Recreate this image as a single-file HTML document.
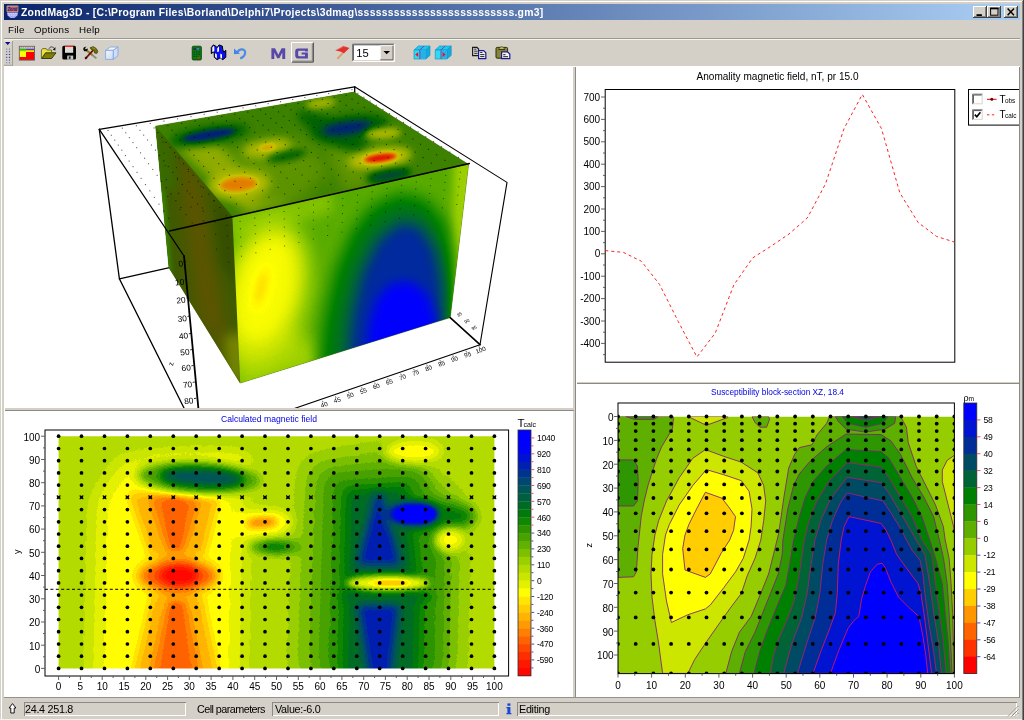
<!DOCTYPE html>
<html>
<head>
<meta charset="utf-8">
<title>ZondMag3D</title>
<style>
html,body{margin:0;padding:0;}
body{width:1024px;height:720px;overflow:hidden;background:#d4d0c8;position:relative;font-family:"Liberation Sans",sans-serif;font-size:10px;color:#000;}
.abs{position:absolute;}
#title-text,.mi,.st{will-change:transform;}
svg{will-change:transform;}
#frame-l1{left:1px;top:1px;width:1px;height:719px;background:#fff;}
#frame-t1{left:1px;top:1px;width:1021px;height:1px;background:#fff;}
#frame-r1{left:1022px;top:1px;width:1px;height:719px;background:#808080;}
#frame-r2{left:1023px;top:0;width:1px;height:720px;background:#404040;}
#frame-b1{left:4px;top:697.4px;width:1015px;height:1px;background:#96928a;}
#frame-b2{left:0;top:719.2px;width:1022px;height:1px;background:#f4f2ee;}
#title{left:4px;top:4px;width:1016px;height:16px;background:linear-gradient(90deg,#0a246a 0%,#a6caf0 97%);}
#title-text{left:21.3px;top:6px;height:14px;line-height:14px;font-weight:bold;font-size:10.4px;color:#fff;white-space:nowrap;letter-spacing:0.255px;}
.tbtn{top:6px;width:14px;height:12px;background:#d4d0c8;box-shadow:inset -1px -1px 0 #404040,inset 1px 1px 0 #fff,inset -2px -2px 0 #808080;}
#menu{left:4px;top:20px;width:1016px;height:18px;}
.mi{top:24.3px;font-size:9.8px;line-height:12px;white-space:nowrap;letter-spacing:0.22px;}
#menu-line1{left:4px;top:38px;width:1016px;height:1px;background:#9c9890;}
#menu-line2{left:4px;top:39px;width:1016px;height:1px;background:#f4f2ee;}
#white{left:4px;top:66px;width:1016px;height:631.6px;background:#fff;}
#frame-b1{z-index:2;}
#vdiv{left:573.4px;top:67px;width:1.6px;height:631px;background:#d4d0c8;}
#vdiv2{left:575px;top:67px;width:1px;height:631px;background:#8c8a84;}
#hdivL{left:5px;top:408px;width:569px;height:2px;background:#d4d0c8;}
#hdivL2{left:5px;top:410px;width:569px;height:1px;background:#8c8a84;}
#hdivR{left:577px;top:382px;width:442px;height:1.4px;background:#d4d0c8;}
#hdivR2{left:577px;top:383.4px;width:442px;height:1px;background:#8c8a84;}
#redge{left:1018.6px;top:67px;width:1.6px;height:631px;background:#8c8a84;}
#status{left:4px;top:698px;width:1016px;height:20px;background:#d4d0c8;}
.sp{top:701.5px;height:14px;box-shadow:inset 1px 1px 0 #8c8a84,inset -1px -1px 0 #fff;}
.st{top:703.2px;font-size:10.8px;line-height:12px;white-space:nowrap;letter-spacing:-0.3px;}
svg{position:absolute;left:0;top:0;}
svg text{font-family:"Liberation Sans",sans-serif;}
</style>
</head>
<body>
<!-- window frame -->
<div class="abs" id="frame-l1"></div><div class="abs" id="frame-t1"></div>
<div class="abs" id="frame-r1"></div><div class="abs" id="frame-r2"></div>
<div class="abs" id="frame-b1"></div><div class="abs" id="frame-b2"></div>
<!-- title bar -->
<div class="abs" id="title"></div>
<div class="abs" id="title-text">ZondMag3D - [C:\Program Files\Borland\Delphi7\Projects\3dmag\ssssssssssssssssssssssssss.gm3]</div>
<div class="abs tbtn" style="left:973px;"></div>
<div class="abs tbtn" style="left:987px;"></div>
<div class="abs tbtn" style="left:1004px;"></div>
<!-- menu -->
<div class="abs mi" style="left:8px;">File</div>
<div class="abs mi" style="left:33.7px;">Options</div>
<div class="abs mi" style="left:78.8px;">Help</div>
<div class="abs" id="menu-line1"></div><div class="abs" id="menu-line2"></div>
<!-- client area -->
<div class="abs" id="white"></div>
<div class="abs" id="vdiv"></div><div class="abs" id="vdiv2"></div>
<div class="abs" id="hdivL"></div><div class="abs" id="hdivL2"></div>
<div class="abs" id="hdivR"></div><div class="abs" id="hdivR2"></div>
<div class="abs" id="redge"></div>
<!-- status bar -->
<div class="abs" id="status"></div>
<div class="abs sp" style="left:24px;width:162px;"></div>
<div class="abs st" style="left:25px;">24.4 251.8</div>
<div class="abs st" style="left:197px;letter-spacing:-0.55px;">Cell parameters</div>
<div class="abs sp" style="left:271.5px;width:227px;"></div>
<div class="abs st" style="left:274.5px;">Value:-6.0</div>
<div class="abs sp" style="left:517px;width:500px;"></div>
<div class="abs st" style="left:518.5px;">Editing</div>
<svg id="chrome" width="1024" height="720" viewBox="0 0 1024 720">
<defs>
<linearGradient id="gCube" x1="0" y1="0" x2="1" y2="1"><stop offset="0" stop-color="#f4f8ff"/><stop offset="1" stop-color="#c8d8f4"/></linearGradient>
</defs>
<!-- title icon -->
<g>
<rect x="6.6" y="5.6" width="11.8" height="6.6" rx="1" fill="#c89870"/>
<rect x="7.4" y="6.8" width="10.2" height="4.4" fill="#7a3a80" opacity="0.55"/><text x="12.5" y="11" font-size="5.4" font-weight="bold" font-style="italic" text-anchor="middle" fill="#4a0a78" textLength="9.6" lengthAdjust="spacingAndGlyphs">Zond</text>
<path d="M6.8 12.4 H18.2 L17.4 15.4 L14.5 18 H10.5 L7.6 15.4 Z" fill="#a8a8f0"/>
<path d="M8 13.6 H17 M8.6 15.2 H16.4" stroke="#e8e8ff" stroke-width="0.9" stroke-dasharray="1.4 1"/>
</g>
<!-- title buttons glyphs -->
<rect x="976.5" y="14.2" width="5.4" height="1.8" fill="#000"/>
<rect x="990.6" y="8.2" width="7.4" height="7" fill="none" stroke="#000" stroke-width="1"/>
<rect x="990.1" y="7.7" width="8.4" height="1.6" fill="#000"/>
<path d="M1007.6 8.6 L1014 15.2 M1014 8.6 L1007.6 15.2" stroke="#000" stroke-width="1.5"/>
<!-- toolbar grip -->
<rect x="4" y="40.5" width="8.5" height="0.9" fill="#fff" opacity="0.8"/>
<rect x="12" y="41" width="0.9" height="24.5" fill="#9c9890"/>
<rect x="4" y="64.8" width="8.8" height="0.9" fill="#9c9890"/>
<path d="M5 42.1 H10.4 L7.7 45 Z" fill="#0a0a84"/>
<g fill="#2a2aa0">
<rect x="6.1" y="48.6" width="1.2" height="1.1" opacity="0.45"/><rect x="8.9" y="48.6" width="1.2" height="1.1" opacity="0.6"/>
<rect x="6.1" y="51.1" width="1.2" height="1.1" opacity="0.55"/><rect x="8.9" y="51.1" width="1.2" height="1.1" opacity="0.8"/>
<rect x="6.1" y="53.9" width="1.2" height="1.1" opacity="0.85"/><rect x="8.9" y="53.9" width="1.2" height="1.1"/>
<rect x="6.1" y="56.8" width="1.2" height="1.1" opacity="0.85"/><rect x="8.9" y="56.8" width="1.2" height="1.1"/>
<rect x="6.1" y="59.5" width="1.2" height="1.1" opacity="0.55"/><rect x="8.9" y="59.5" width="1.2" height="1.1" opacity="0.8"/>
<rect x="6.1" y="62.2" width="1.2" height="1.1" opacity="0.45"/><rect x="8.9" y="62.2" width="1.2" height="1.1" opacity="0.6"/>
</g>
<!-- icon1: model window -->
<g>
<rect x="19.3" y="46.3" width="15.2" height="13.8" fill="#ff0000" stroke="#606060" stroke-width="0.9"/>
<rect x="19.8" y="46.8" width="14.2" height="2" fill="#e8e8e8"/>
<path d="M20.4 47.8 H33.6" stroke="#707070" stroke-width="0.8" stroke-dasharray="1.6 0.7"/>
<rect x="19.8" y="48.8" width="6.8" height="2" fill="#10c020"/>
<rect x="26.4" y="48.8" width="7.6" height="1.4" fill="#3848c8"/>
<rect x="26" y="50.2" width="8" height="1.8" fill="#ffe800"/>
<rect x="19.8" y="50.8" width="6.2" height="6.2" fill="#ffff00"/>
<rect x="19.8" y="50.2" width="6.2" height="1.1" fill="#80e010"/>
</g>
<!-- icon2: open folder -->
<g>
<path d="M41.4 58.4 V50 L42.6 48.6 H46.2 L47.2 50 H51.6 V52.4" fill="#e8e040" stroke="#404020" stroke-width="0.7"/>
<path d="M41.6 58.5 L45.6 52.8 H56 L51.6 58.5 Z" fill="#808000" stroke="#202010" stroke-width="0.8"/>
<path d="M49 48.6 C50 46.4 53 46.4 54.2 48.4" fill="none" stroke="#303030" stroke-width="0.9"/>
<path d="M52.8 49.8 L55.4 47 L55.4 50.4 Z" fill="#101010"/>
</g>
<!-- icon3: floppy -->
<g>
<rect x="62.3" y="45.8" width="13.7" height="13.8" rx="1.6" fill="#000"/>
<rect x="65" y="45.8" width="8.2" height="1.2" fill="#ff2020"/>
<rect x="65" y="47" width="8.2" height="5.8" fill="#dcdad4"/>
<rect x="67.2" y="55.6" width="6" height="4" fill="#c8c8c8"/>
<rect x="68.8" y="56.4" width="1.8" height="2.4" fill="#202020"/>
</g>
<!-- icon4: tools -->
<g>
<path d="M86.4 50.2 L96.4 58.4" stroke="#8a8a80" stroke-width="1.8"/>
<path d="M86.4 50.2 L92.4 55" stroke="#8a8a00" stroke-width="1.8"/>
<path d="M83.3 49.2 C83 47.4 84.6 46.4 86.6 46.8 L85 48.1 L85.6 49.3 L87.8 48.4 C88 50.2 86.8 51.4 85 51.3 C84.1 51.2 83.5 50.4 83.3 49.2 Z" fill="#0c0c0c"/>
<path d="M85.4 58.6 L93 50.4" stroke="#780a14" stroke-width="1.7"/>
<path d="M85.2 58.8 L86.8 57.1" stroke="#181818" stroke-width="2"/>
<path d="M90 47.8 L93.2 46.6 L96.2 48.4 L97.9 51.2 L96.8 53.5 L94.5 53.1 L94.2 50.9 L91.4 49.6 Z" fill="#6e6e00" stroke="#2c2c00" stroke-width="0.6" stroke-linejoin="round"/>
<path d="M92.2 47.6 L95.4 49" stroke="#a8a820" stroke-width="0.7"/>
</g>
<!-- icon5: cube -->
<g stroke="#86a8e0" stroke-width="0.9" stroke-linejoin="round">
<path d="M105.6 50.4 L110.4 47 H118 L113.2 50.4 Z" fill="#f0f4ff"/>
<path d="M113.2 50.4 L118 47 V55.6 L113.2 59.4 Z" fill="#d0dcf4"/>
<rect x="105.6" y="50.4" width="7.6" height="9" fill="url(#gCube)"/>
</g>
<!-- calc -->
<g>
<rect x="192.2" y="46.2" width="9.2" height="13.8" rx="1.2" fill="#0a7a14" stroke="#0a3a0a" stroke-width="0.8"/>
<rect x="193.6" y="47.8" width="6.4" height="2.2" fill="#203838"/>
<rect x="196.4" y="48.2" width="3" height="1.4" fill="#40a0c0"/>
<g fill="#064a0a"><rect x="193.6" y="51.4" width="1.4" height="1.1"/><rect x="196.1" y="51.4" width="1.4" height="1.1"/><rect x="198.6" y="51.4" width="1.4" height="1.1"/>
<rect x="193.6" y="53.6" width="1.4" height="1.1"/><rect x="196.1" y="53.6" width="1.4" height="1.1"/><rect x="198.6" y="53.6" width="1.4" height="1.1"/>
<rect x="193.6" y="55.8" width="1.4" height="1.1"/><rect x="196.1" y="55.8" width="1.4" height="1.1"/></g>
<rect x="197.4" y="57.4" width="2.8" height="1.2" fill="#e03010"/>
</g>
<!-- wave -->
<path d="M211.3 53.6 V47.5 L213.4 44.9 L215.7 46.1 L217.1 47.5 L219 44.9 L222.3 46.1 L222.8 49.4 L223.7 52.2 L225.8 50.3 V57.3 L222.8 59.7 L220.2 57.8 L217.1 59.7 L214.3 57.3 L214.1 51.7 Z" fill="#0a10f0" stroke="#000" stroke-width="1" stroke-linejoin="round"/>
<path d="M212.3 52 V47.4 L213.6 46 L214.3 46.6 V51.2 Z M217.2 52 V48.4 L219 46.2 V51.6 Z M215.1 53.2 L216.8 54.2 V58.4 L215.1 57 Z M220.3 53.6 L222 54.6 V58.8 L220.3 57.4 Z" fill="#fff"/>
<!-- undo -->
<g>
<path d="M237.6 52 C239.6 48.4 245.6 48.2 245.1 53.2 C244.8 55.8 242.8 57.6 240.2 58.4" fill="none" stroke="#4a8ae8" stroke-width="2.2"/>
<path d="M234 48.6 V54.2 L240 53.7 Z" fill="#3f86ea"/>
</g>
<!-- M -->
<path d="M271.4 59 V48.2 H275 L278.3 54.8 L281.6 48.2 H285.2 V59 H282.3 V52.4 L279.4 58.2 H277.2 L274.3 52.4 V59 Z" fill="#5848a8"/>
<!-- G button -->
<rect x="291" y="42" width="22.8" height="20.6" fill="#d4d0c8"/>
<path d="M291.5 62 V42.5 H313" fill="none" stroke="#fff" stroke-width="1"/>
<path d="M292 62.1 H313.3 V42.6" fill="none" stroke="#404040" stroke-width="1"/>
<path d="M293 61.1 H312.3 V43.6" fill="none" stroke="#808080" stroke-width="1"/>
<path d="M307.9 51.6 V48.4 H298 C296.2 48.4 295.2 49.6 295.2 51.4 V55.4 C295.2 57.4 296.4 58.6 298.2 58.6 H307.9 V52.6 H301.6 V54.4 H305 V56.2 H299.4 C298.6 56.2 298.2 55.8 298.2 55 V52 C298.2 51.2 298.6 50.8 299.4 50.8 H305 V51.6 Z" fill="#5848a8"/>
<!-- flag -->
<g>
<path d="M337.4 58.8 L344 51.6" stroke="#d8a060" stroke-width="1.8"/>
<path d="M335.4 50.6 L343.6 46 L349.4 48 L344 53.2 L340.2 51.4 Z" fill="#e03030"/>
<path d="M335.6 50.4 L343.6 46.2 L346 47" stroke="#f08080" stroke-width="0.8" fill="none"/>
</g>
<!-- combo -->
<g>
<rect x="352" y="43.4" width="43" height="18.4" fill="#fff"/>
<path d="M352.5 61.4 V43.9 H394.6" fill="none" stroke="#808080" stroke-width="1"/>
<path d="M353.4 60.5 V44.8 H393.8" fill="none" stroke="#404040" stroke-width="0.9"/>
<path d="M352.5 61.4 H394.6 V43.9" fill="none" stroke="#fff" stroke-width="1"/>
<path d="M353.4 60.5 H393.7 V44.8" fill="none" stroke="#d4d0c8" stroke-width="0.9"/>
<rect x="380" y="45.3" width="13.3" height="14.8" fill="#d4d0c8"/>
<path d="M380.4 59.8 V45.7 H393" fill="none" stroke="#fff" stroke-width="0.8"/>
<path d="M380.4 59.8 H393 V45.7" fill="none" stroke="#606060" stroke-width="0.9"/>
<path d="M383.4 51 H390 L386.7 54.2 Z" fill="#000"/>
<text x="356.2" y="56.7" font-size="11.2" fill="#000">15</text>
</g>
<!-- cube-left -->
<g stroke-linejoin="round">
<path d="M414 50 L418.4 46 H430 L425.8 50 Z" fill="#20c8f0" stroke="#1098d0" stroke-width="0.7"/>
<path d="M425.8 50 L430 46 V55.4 L425.8 59 Z" fill="#18a8d8" stroke="#1098d0" stroke-width="0.7"/>
<rect x="414" y="50" width="11.8" height="9" fill="#30d8f0" stroke="#1098d0" stroke-width="0.7"/>
<rect x="420" y="50.4" width="5.4" height="8.2" fill="#28b0e8"/>
<path d="M419.8 59 V50 L424 46" fill="none" stroke="#7048b0" stroke-width="1"/>
<path d="M415.2 54.6 L418.2 52.2 V57 Z" fill="#f01020"/>
</g>
<!-- cube-right -->
<g stroke-linejoin="round">
<path d="M435.2 50 L439.6 46 H451.2 L447 50 Z" fill="#20c8f0" stroke="#1098d0" stroke-width="0.7"/>
<path d="M447 50 L451.2 46 V55.4 L447 59 Z" fill="#18a8d8" stroke="#1098d0" stroke-width="0.7"/>
<rect x="435.2" y="50" width="11.8" height="9" fill="#30d8f0" stroke="#1098d0" stroke-width="0.7"/>
<rect x="441.4" y="50.4" width="5.2" height="8.2" fill="#28b0e8"/>
<path d="M441 59 V50 L445.2 46" fill="none" stroke="#7048b0" stroke-width="1"/>
<path d="M445.6 54.6 L442.6 52.2 V57 Z" fill="#f01020"/>
</g>
<!-- copy -->
<g>
<path d="M472.6 47.4 H477 L478.6 49 V55.6 H472.6 Z" fill="#d0d0d0" stroke="#181818" stroke-width="1.1"/>
<path d="M474.2 49.2 H476.4 M474.2 51.2 H477.6 M474.2 53.4 H477.6" stroke="#101010" stroke-width="0.8"/>
<path d="M478.6 50.6 H483.6 L485.8 52.8 V58.6 H478.6 Z" fill="#f4f4f4" stroke="#181890" stroke-width="1.2"/>
<path d="M480.2 52.5 H482.4 M480.2 54.6 H484.4 M480.2 56.6 H484.4" stroke="#080808" stroke-width="0.9"/>
</g>
<!-- paste -->
<g>
<rect x="496" y="47.4" width="11.6" height="10.8" rx="1.2" fill="#86863a" stroke="#2a2a10" stroke-width="1"/>
<path d="M499 49.4 C499.4 46 504 46 504.4 49.4 Z" fill="#d8d020" stroke="#38381a" stroke-width="0.7"/>
<path d="M498.4 49.6 H505.2" stroke="#303030" stroke-width="0.9"/>
<path d="M501.6 51.8 H507.4 L509.8 54 V58.6 H501.6 Z" fill="#f4f4f4" stroke="#181890" stroke-width="1.2"/>
<path d="M503.2 54.7 H505.6 M503.2 56.7 H508" stroke="#080808" stroke-width="0.9"/>
</g>
<!-- status icons -->
<path d="M12.5 703.6 L15.9 708 H14.2 V713 H10.8 V708 H9.1 Z" fill="#fff" stroke="#000" stroke-width="0.9"/>
<g fill="#1848d8"><rect x="507.4" y="703.4" width="3" height="2.4"/><path d="M506.4 707 H510.4 V713 H511.4 V714.2 H506.4 V713 H507.4 V708.2 H506.4 Z"/></g>
<!-- size grip -->
<path d="M1008 716.5 L1018.5 706 M1011.5 716.5 L1018.5 709.5 M1015 716.5 L1018.5 713" stroke="#8c8a84" stroke-width="1"/>
<path d="M1009 716.5 L1018.5 707 M1012.5 716.5 L1018.5 710.5 M1016 716.5 L1018.5 714" stroke="#fff" stroke-width="0.8"/>

</svg>

<svg id="ctr" width="1024" height="720" viewBox="0 0 1024 720">
<defs><clipPath id="clipTR"><rect x="577" y="67" width="442" height="315"/></clipPath></defs>
<g clip-path="url(#clipTR)">
<text x="777.5" y="80" font-size="10" text-anchor="middle" fill="#000" textLength="162" lengthAdjust="spacingAndGlyphs">Anomality magnetic field, nT,  pr 15.0</text>
<rect x="605.2" y="89.5" width="349.6" height="272.7" fill="none" stroke="#000" stroke-width="1"/>
<path d="M601 97.0 H605" stroke="#505050" stroke-width="0.9"/>
<text x="600.2" y="100.6" font-size="10" text-anchor="end">700</text>
<path d="M601 119.4 H605" stroke="#505050" stroke-width="0.9"/>
<text x="600.2" y="123.0" font-size="10" text-anchor="end">600</text>
<path d="M601 141.8 H605" stroke="#505050" stroke-width="0.9"/>
<text x="600.2" y="145.4" font-size="10" text-anchor="end">500</text>
<path d="M601 164.2 H605" stroke="#505050" stroke-width="0.9"/>
<text x="600.2" y="167.8" font-size="10" text-anchor="end">400</text>
<path d="M601 186.6 H605" stroke="#505050" stroke-width="0.9"/>
<text x="600.2" y="190.2" font-size="10" text-anchor="end">300</text>
<path d="M601 209.0 H605" stroke="#505050" stroke-width="0.9"/>
<text x="600.2" y="212.6" font-size="10" text-anchor="end">200</text>
<path d="M601 231.4 H605" stroke="#505050" stroke-width="0.9"/>
<text x="600.2" y="235.0" font-size="10" text-anchor="end">100</text>
<path d="M601 253.8 H605" stroke="#505050" stroke-width="0.9"/>
<text x="600.2" y="257.4" font-size="10" text-anchor="end">0</text>
<path d="M601 276.2 H605" stroke="#505050" stroke-width="0.9"/>
<text x="600.2" y="279.8" font-size="10" text-anchor="end">-100</text>
<path d="M601 298.6 H605" stroke="#505050" stroke-width="0.9"/>
<text x="600.2" y="302.2" font-size="10" text-anchor="end">-200</text>
<path d="M601 321.0 H605" stroke="#505050" stroke-width="0.9"/>
<text x="600.2" y="324.6" font-size="10" text-anchor="end">-300</text>
<path d="M601 343.4 H605" stroke="#505050" stroke-width="0.9"/>
<text x="600.2" y="347.0" font-size="10" text-anchor="end">-400</text>
<path d="M603 108.2 H605" stroke="#505050" stroke-width="0.9"/>
<path d="M603 130.6 H605" stroke="#505050" stroke-width="0.9"/>
<path d="M603 153.0 H605" stroke="#505050" stroke-width="0.9"/>
<path d="M603 175.4 H605" stroke="#505050" stroke-width="0.9"/>
<path d="M603 197.8 H605" stroke="#505050" stroke-width="0.9"/>
<path d="M603 220.2 H605" stroke="#505050" stroke-width="0.9"/>
<path d="M603 242.6 H605" stroke="#505050" stroke-width="0.9"/>
<path d="M603 265.0 H605" stroke="#505050" stroke-width="0.9"/>
<path d="M603 287.4 H605" stroke="#505050" stroke-width="0.9"/>
<path d="M603 309.8 H605" stroke="#505050" stroke-width="0.9"/>
<path d="M603 332.2 H605" stroke="#505050" stroke-width="0.9"/>
<path d="M603 354.6 H605" stroke="#505050" stroke-width="0.9"/>
<path d="M605.3 250.6 L623.4 252.4 L641.5 261.3 L659.6 284.5 L678.2 321.4 L696.9 357.0 L715.2 333.2 L733.8 285.0 L752.6 258.0 L771.0 246.2 L789.0 234.0 L807.3 218.0 L825.6 183.7 L844.0 128.7 L862.3 94.4 L881.5 128.7 L899.8 192.8 L918.2 222.6 L936.5 236.4 L954.0 241.9" fill="none" stroke="#ff2020" stroke-width="1" stroke-dasharray="3 3"/>
<rect x="968.5" y="89.5" width="60" height="35.6" fill="#fff" stroke="#000" stroke-width="1"/>
<rect x="972" y="93.6" width="10.6" height="10.6" fill="#fff"/>
<path d="M972.5 104.19999999999999 V94.1 H982.6" fill="none" stroke="#808080" stroke-width="1"/>
<path d="M973.4 103.39999999999999 V95.0 H981.8" fill="none" stroke="#404040" stroke-width="0.9"/>
<path d="M973 103.8 H982.2 V94.6" fill="none" stroke="#d4d0c8" stroke-width="0.9"/>
<rect x="972" y="109.2" width="10.6" height="10.6" fill="#fff"/>
<path d="M972.5 119.8 V109.7 H982.6" fill="none" stroke="#808080" stroke-width="1"/>
<path d="M973.4 119.0 V110.60000000000001 H981.8" fill="none" stroke="#404040" stroke-width="0.9"/>
<path d="M973 119.4 H982.2 V110.2" fill="none" stroke="#d4d0c8" stroke-width="0.9"/>
<path d="M974.8 114.6 L976.8 116.8 L980.4 112.2" fill="none" stroke="#000" stroke-width="1.6"/>
<path d="M987 99.3 H996.6" stroke="#e00000" stroke-width="1"/><circle cx="991.8" cy="99.3" r="1.5" fill="#700000"/>
<path d="M987 114.8 H996.6" stroke="#ff2020" stroke-width="1" stroke-dasharray="2.4 2.4"/>
<text x="999.6" y="102.8" font-size="10">T</text><text x="1005" y="102.8" font-size="6.4">obs</text>
<text x="999.6" y="118.4" font-size="10">T</text><text x="1005" y="118.4" font-size="6.4">calc</text>
</g></svg>
<svg id="cbl" width="1024" height="720" viewBox="0 0 1024 720">
<defs>
<clipPath id="clipBL"><rect x="58.6" y="436.25" width="435.79999999999995" height="232.14999999999998"/></clipPath>
<filter id="cmBL" x="0" y="0" width="1" height="1" color-interpolation-filters="sRGB"><feComponentTransfer><feFuncR type="discrete" tableValues="1.000 1.000 1.000 1.000 1.000 1.000 1.000 1.000 1.000 1.000 1.000 0.892 0.794 0.706 0.602 0.486 0.379 0.282 0.175 0.058 0.000 0.000 0.000 0.000 0.000 0.000 0.000 0.000 0.000 0.000 0.000"/><feFuncG type="discrete" tableValues="0.032 0.095 0.180 0.277 0.387 0.503 0.608 0.706 0.803 0.900 0.996 0.946 0.900 0.861 0.811 0.753 0.694 0.636 0.581 0.528 0.474 0.420 0.373 0.334 0.277 0.199 0.124 0.061 0.015 0.000 0.000"/><feFuncB type="discrete" tableValues="0.000 0.000 0.000 0.000 0.000 0.000 0.000 0.000 0.000 0.000 0.000 0.000 0.000 0.000 0.000 0.000 0.000 0.000 0.000 0.000 0.049 0.146 0.244 0.341 0.448 0.564 0.694 0.832 0.958 1.000 1.000"/></feComponentTransfer></filter>
<filter id="b2" x="-1" y="-1" width="3" height="3" color-interpolation-filters="sRGB"><feGaussianBlur stdDeviation="2"/></filter>
<filter id="b3" x="-1" y="-1" width="3" height="3" color-interpolation-filters="sRGB"><feGaussianBlur stdDeviation="3"/></filter>
<filter id="b4" x="-1" y="-1" width="3" height="3" color-interpolation-filters="sRGB"><feGaussianBlur stdDeviation="4"/></filter>
<filter id="b5" x="-1" y="-1" width="3" height="3" color-interpolation-filters="sRGB"><feGaussianBlur stdDeviation="5"/></filter>
<filter id="b6" x="-1" y="-1" width="3" height="3" color-interpolation-filters="sRGB"><feGaussianBlur stdDeviation="6"/></filter>
<filter id="b7" x="-1" y="-1" width="3" height="3" color-interpolation-filters="sRGB"><feGaussianBlur stdDeviation="7"/></filter>
<filter id="b8" x="-1" y="-1" width="3" height="3" color-interpolation-filters="sRGB"><feGaussianBlur stdDeviation="8"/></filter>
<filter id="b10" x="-1" y="-1" width="3" height="3" color-interpolation-filters="sRGB"><feGaussianBlur stdDeviation="10"/></filter>
<filter id="b12" x="-1" y="-1" width="3" height="3" color-interpolation-filters="sRGB"><feGaussianBlur stdDeviation="12"/></filter>
<filter id="b14" x="-1" y="-1" width="3" height="3" color-interpolation-filters="sRGB"><feGaussianBlur stdDeviation="14"/></filter>
</defs>
<g clip-path="url(#clipBL)"><g filter="url(#cmBL)">
<rect x="40" y="420" width="480" height="270" fill="#6f6f6f"/>
<polygon points="96,500 122,460 244,456 240,690 92,690" fill="#585858" filter="url(#b10)"/>
<polygon points="128,493 220,493 204,556 150,556" fill="#3e3e3e" filter="url(#b5)"/>
<polygon points="152,596 202,596 220,680 132,680" fill="#3e3e3e" filter="url(#b5)"/>
<polygon points="160,540 194,540 194,610 160,610" fill="#424242" filter="url(#b5)"/>
<polygon points="150,496 200,496 184,552 168,552" fill="#2a2a2a" filter="url(#b4)"/>
<polygon points="168,600 186,600 202,680 150,680" fill="#2a2a2a" filter="url(#b4)"/>
<polygon points="166,498 184,498 178,548 172,548" fill="#222222" filter="url(#b3)"/>
<polygon points="172,604 180,604 186,682 164,682" fill="#222222" filter="url(#b3)"/>
<ellipse cx="178" cy="576" rx="40" ry="16" fill="#212121" filter="url(#b6)"/>
<ellipse cx="179" cy="575.5" rx="19" ry="9" fill="#000000" filter="url(#b4)"/>
<ellipse cx="196" cy="460" rx="52" ry="7" fill="#5c5c5c" filter="url(#b5)"/>
<ellipse cx="199" cy="478" rx="62" ry="16" fill="#919191" filter="url(#b5)" transform="rotate(3 199 478)"/>
<ellipse cx="202" cy="477.5" rx="42" ry="9.5" fill="#c2c2c2" filter="url(#b4)" transform="rotate(3 202 477.5)"/>
<ellipse cx="258" cy="524" rx="37" ry="14" fill="#555555" filter="url(#b5)" transform="rotate(-4 258 524)"/>
<ellipse cx="262" cy="522.5" rx="15" ry="4.5" fill="#2b2b2b" filter="url(#b3)" transform="rotate(-4 262 522.5)"/>
<ellipse cx="277" cy="547" rx="27" ry="7" fill="#999999" filter="url(#b4)"/>
<ellipse cx="277" cy="547" rx="14" ry="3.5" fill="#a8a8a8" filter="url(#b3)"/>
<polygon points="306,462 395,448 462,500 458,680 296,680 300,560" fill="#878787" filter="url(#b12)"/>
<polygon points="328,476 420,470 442,520 440,680 322,680" fill="#999999" filter="url(#b8)"/>
<polygon points="346,490 408,486 420,600 418,680 342,680" fill="#b0b0b0" filter="url(#b6)"/>
<polygon points="375,494 383,494 402,566 356,566" fill="#d9d9d9" filter="url(#b5)"/>
<polygon points="357,603 400,603 390,690 370,690" fill="#d9d9d9" filter="url(#b5)"/>
<ellipse cx="432" cy="516" rx="44" ry="14" fill="#a8a8a8" filter="url(#b6)"/>
<ellipse cx="412" cy="514" rx="26" ry="11.5" fill="#e6e6e6" filter="url(#b4)"/>
<ellipse cx="416" cy="514" rx="20" ry="8" fill="#ffffff" filter="url(#b3)"/>
<ellipse cx="413" cy="451.5" rx="28" ry="11" fill="#575757" filter="url(#b4)"/>
<ellipse cx="450" cy="540" rx="15" ry="12" fill="#585858" filter="url(#b4)"/>
<ellipse cx="386" cy="597" rx="48" ry="5" fill="#b0b0b0" filter="url(#b4)"/>
<ellipse cx="388" cy="583" rx="42" ry="7.5" fill="#585858" filter="url(#b3)"/>
<ellipse cx="391" cy="583" rx="18" ry="2.6" fill="#3b3b3b" filter="url(#b2)"/>
</g></g>
<g fill="#000"><circle cx="58.6" cy="436.2" r="1.85"/><circle cx="81.5" cy="436.2" r="1.85"/><circle cx="104.5" cy="436.2" r="1.85"/><circle cx="127.4" cy="436.2" r="1.85"/><circle cx="150.3" cy="436.2" r="1.85"/><circle cx="173.3" cy="436.2" r="1.85"/><circle cx="196.2" cy="436.2" r="1.85"/><circle cx="219.2" cy="436.2" r="1.85"/><circle cx="242.1" cy="436.2" r="1.85"/><circle cx="265.0" cy="436.2" r="1.85"/><circle cx="288.0" cy="436.2" r="1.85"/><circle cx="310.9" cy="436.2" r="1.85"/><circle cx="333.8" cy="436.2" r="1.85"/><circle cx="356.8" cy="436.2" r="1.85"/><circle cx="379.7" cy="436.2" r="1.85"/><circle cx="402.7" cy="436.2" r="1.85"/><circle cx="425.6" cy="436.2" r="1.85"/><circle cx="448.5" cy="436.2" r="1.85"/><circle cx="471.5" cy="436.2" r="1.85"/><circle cx="494.4" cy="436.2" r="1.85"/><circle cx="58.6" cy="448.5" r="1.85"/><circle cx="81.5" cy="448.5" r="1.85"/><circle cx="104.5" cy="448.5" r="1.85"/><circle cx="127.4" cy="448.5" r="1.85"/><circle cx="150.3" cy="448.5" r="1.85"/><circle cx="173.3" cy="448.5" r="1.85"/><circle cx="196.2" cy="448.5" r="1.85"/><circle cx="219.2" cy="448.5" r="1.85"/><circle cx="242.1" cy="448.5" r="1.85"/><circle cx="265.0" cy="448.5" r="1.85"/><circle cx="288.0" cy="448.5" r="1.85"/><circle cx="310.9" cy="448.5" r="1.85"/><circle cx="333.8" cy="448.5" r="1.85"/><circle cx="356.8" cy="448.5" r="1.85"/><circle cx="379.7" cy="448.5" r="1.85"/><circle cx="402.7" cy="448.5" r="1.85"/><circle cx="425.6" cy="448.5" r="1.85"/><circle cx="448.5" cy="448.5" r="1.85"/><circle cx="471.5" cy="448.5" r="1.85"/><circle cx="494.4" cy="448.5" r="1.85"/><circle cx="58.6" cy="460.7" r="1.85"/><circle cx="81.5" cy="460.7" r="1.85"/><circle cx="104.5" cy="460.7" r="1.85"/><circle cx="127.4" cy="460.7" r="1.85"/><circle cx="150.3" cy="460.7" r="1.85"/><circle cx="173.3" cy="460.7" r="1.85"/><circle cx="196.2" cy="460.7" r="1.85"/><circle cx="219.2" cy="460.7" r="1.85"/><circle cx="242.1" cy="460.7" r="1.85"/><circle cx="265.0" cy="460.7" r="1.85"/><circle cx="288.0" cy="460.7" r="1.85"/><circle cx="310.9" cy="460.7" r="1.85"/><circle cx="333.8" cy="460.7" r="1.85"/><circle cx="356.8" cy="460.7" r="1.85"/><circle cx="379.7" cy="460.7" r="1.85"/><circle cx="402.7" cy="460.7" r="1.85"/><circle cx="425.6" cy="460.7" r="1.85"/><circle cx="448.5" cy="460.7" r="1.85"/><circle cx="471.5" cy="460.7" r="1.85"/><circle cx="494.4" cy="460.7" r="1.85"/><circle cx="58.6" cy="472.9" r="1.85"/><circle cx="81.5" cy="472.9" r="1.85"/><circle cx="104.5" cy="472.9" r="1.85"/><circle cx="127.4" cy="472.9" r="1.85"/><circle cx="150.3" cy="472.9" r="1.85"/><circle cx="173.3" cy="472.9" r="1.85"/><circle cx="196.2" cy="472.9" r="1.85"/><circle cx="219.2" cy="472.9" r="1.85"/><circle cx="242.1" cy="472.9" r="1.85"/><circle cx="265.0" cy="472.9" r="1.85"/><circle cx="288.0" cy="472.9" r="1.85"/><circle cx="310.9" cy="472.9" r="1.85"/><circle cx="333.8" cy="472.9" r="1.85"/><circle cx="356.8" cy="472.9" r="1.85"/><circle cx="379.7" cy="472.9" r="1.85"/><circle cx="402.7" cy="472.9" r="1.85"/><circle cx="425.6" cy="472.9" r="1.85"/><circle cx="448.5" cy="472.9" r="1.85"/><circle cx="471.5" cy="472.9" r="1.85"/><circle cx="494.4" cy="472.9" r="1.85"/><circle cx="58.6" cy="485.1" r="1.85"/><circle cx="81.5" cy="485.1" r="1.85"/><circle cx="104.5" cy="485.1" r="1.85"/><circle cx="127.4" cy="485.1" r="1.85"/><circle cx="150.3" cy="485.1" r="1.85"/><circle cx="173.3" cy="485.1" r="1.85"/><circle cx="196.2" cy="485.1" r="1.85"/><circle cx="219.2" cy="485.1" r="1.85"/><circle cx="242.1" cy="485.1" r="1.85"/><circle cx="265.0" cy="485.1" r="1.85"/><circle cx="288.0" cy="485.1" r="1.85"/><circle cx="310.9" cy="485.1" r="1.85"/><circle cx="333.8" cy="485.1" r="1.85"/><circle cx="356.8" cy="485.1" r="1.85"/><circle cx="379.7" cy="485.1" r="1.85"/><circle cx="402.7" cy="485.1" r="1.85"/><circle cx="425.6" cy="485.1" r="1.85"/><circle cx="448.5" cy="485.1" r="1.85"/><circle cx="471.5" cy="485.1" r="1.85"/><circle cx="494.4" cy="485.1" r="1.85"/><circle cx="58.6" cy="509.6" r="1.85"/><circle cx="81.5" cy="509.6" r="1.85"/><circle cx="104.5" cy="509.6" r="1.85"/><circle cx="127.4" cy="509.6" r="1.85"/><circle cx="150.3" cy="509.6" r="1.85"/><circle cx="173.3" cy="509.6" r="1.85"/><circle cx="196.2" cy="509.6" r="1.85"/><circle cx="219.2" cy="509.6" r="1.85"/><circle cx="242.1" cy="509.6" r="1.85"/><circle cx="265.0" cy="509.6" r="1.85"/><circle cx="288.0" cy="509.6" r="1.85"/><circle cx="310.9" cy="509.6" r="1.85"/><circle cx="333.8" cy="509.6" r="1.85"/><circle cx="356.8" cy="509.6" r="1.85"/><circle cx="379.7" cy="509.6" r="1.85"/><circle cx="402.7" cy="509.6" r="1.85"/><circle cx="425.6" cy="509.6" r="1.85"/><circle cx="448.5" cy="509.6" r="1.85"/><circle cx="471.5" cy="509.6" r="1.85"/><circle cx="494.4" cy="509.6" r="1.85"/><circle cx="58.6" cy="521.8" r="1.85"/><circle cx="81.5" cy="521.8" r="1.85"/><circle cx="104.5" cy="521.8" r="1.85"/><circle cx="127.4" cy="521.8" r="1.85"/><circle cx="150.3" cy="521.8" r="1.85"/><circle cx="173.3" cy="521.8" r="1.85"/><circle cx="196.2" cy="521.8" r="1.85"/><circle cx="219.2" cy="521.8" r="1.85"/><circle cx="242.1" cy="521.8" r="1.85"/><circle cx="265.0" cy="521.8" r="1.85"/><circle cx="288.0" cy="521.8" r="1.85"/><circle cx="310.9" cy="521.8" r="1.85"/><circle cx="333.8" cy="521.8" r="1.85"/><circle cx="356.8" cy="521.8" r="1.85"/><circle cx="379.7" cy="521.8" r="1.85"/><circle cx="402.7" cy="521.8" r="1.85"/><circle cx="425.6" cy="521.8" r="1.85"/><circle cx="448.5" cy="521.8" r="1.85"/><circle cx="471.5" cy="521.8" r="1.85"/><circle cx="494.4" cy="521.8" r="1.85"/><circle cx="58.6" cy="534.0" r="1.85"/><circle cx="81.5" cy="534.0" r="1.85"/><circle cx="104.5" cy="534.0" r="1.85"/><circle cx="127.4" cy="534.0" r="1.85"/><circle cx="150.3" cy="534.0" r="1.85"/><circle cx="173.3" cy="534.0" r="1.85"/><circle cx="196.2" cy="534.0" r="1.85"/><circle cx="219.2" cy="534.0" r="1.85"/><circle cx="242.1" cy="534.0" r="1.85"/><circle cx="265.0" cy="534.0" r="1.85"/><circle cx="288.0" cy="534.0" r="1.85"/><circle cx="310.9" cy="534.0" r="1.85"/><circle cx="333.8" cy="534.0" r="1.85"/><circle cx="356.8" cy="534.0" r="1.85"/><circle cx="379.7" cy="534.0" r="1.85"/><circle cx="402.7" cy="534.0" r="1.85"/><circle cx="425.6" cy="534.0" r="1.85"/><circle cx="448.5" cy="534.0" r="1.85"/><circle cx="471.5" cy="534.0" r="1.85"/><circle cx="494.4" cy="534.0" r="1.85"/><circle cx="58.6" cy="546.2" r="1.85"/><circle cx="81.5" cy="546.2" r="1.85"/><circle cx="104.5" cy="546.2" r="1.85"/><circle cx="127.4" cy="546.2" r="1.85"/><circle cx="150.3" cy="546.2" r="1.85"/><circle cx="173.3" cy="546.2" r="1.85"/><circle cx="196.2" cy="546.2" r="1.85"/><circle cx="219.2" cy="546.2" r="1.85"/><circle cx="242.1" cy="546.2" r="1.85"/><circle cx="265.0" cy="546.2" r="1.85"/><circle cx="288.0" cy="546.2" r="1.85"/><circle cx="310.9" cy="546.2" r="1.85"/><circle cx="333.8" cy="546.2" r="1.85"/><circle cx="356.8" cy="546.2" r="1.85"/><circle cx="379.7" cy="546.2" r="1.85"/><circle cx="402.7" cy="546.2" r="1.85"/><circle cx="425.6" cy="546.2" r="1.85"/><circle cx="448.5" cy="546.2" r="1.85"/><circle cx="471.5" cy="546.2" r="1.85"/><circle cx="494.4" cy="546.2" r="1.85"/><circle cx="58.6" cy="558.4" r="1.85"/><circle cx="81.5" cy="558.4" r="1.85"/><circle cx="104.5" cy="558.4" r="1.85"/><circle cx="127.4" cy="558.4" r="1.85"/><circle cx="150.3" cy="558.4" r="1.85"/><circle cx="173.3" cy="558.4" r="1.85"/><circle cx="196.2" cy="558.4" r="1.85"/><circle cx="219.2" cy="558.4" r="1.85"/><circle cx="242.1" cy="558.4" r="1.85"/><circle cx="265.0" cy="558.4" r="1.85"/><circle cx="288.0" cy="558.4" r="1.85"/><circle cx="310.9" cy="558.4" r="1.85"/><circle cx="333.8" cy="558.4" r="1.85"/><circle cx="356.8" cy="558.4" r="1.85"/><circle cx="379.7" cy="558.4" r="1.85"/><circle cx="402.7" cy="558.4" r="1.85"/><circle cx="425.6" cy="558.4" r="1.85"/><circle cx="448.5" cy="558.4" r="1.85"/><circle cx="471.5" cy="558.4" r="1.85"/><circle cx="494.4" cy="558.4" r="1.85"/><circle cx="58.6" cy="570.7" r="1.85"/><circle cx="81.5" cy="570.7" r="1.85"/><circle cx="104.5" cy="570.7" r="1.85"/><circle cx="127.4" cy="570.7" r="1.85"/><circle cx="150.3" cy="570.7" r="1.85"/><circle cx="173.3" cy="570.7" r="1.85"/><circle cx="196.2" cy="570.7" r="1.85"/><circle cx="219.2" cy="570.7" r="1.85"/><circle cx="242.1" cy="570.7" r="1.85"/><circle cx="265.0" cy="570.7" r="1.85"/><circle cx="288.0" cy="570.7" r="1.85"/><circle cx="310.9" cy="570.7" r="1.85"/><circle cx="333.8" cy="570.7" r="1.85"/><circle cx="356.8" cy="570.7" r="1.85"/><circle cx="379.7" cy="570.7" r="1.85"/><circle cx="402.7" cy="570.7" r="1.85"/><circle cx="425.6" cy="570.7" r="1.85"/><circle cx="448.5" cy="570.7" r="1.85"/><circle cx="471.5" cy="570.7" r="1.85"/><circle cx="494.4" cy="570.7" r="1.85"/><circle cx="58.6" cy="582.9" r="1.85"/><circle cx="81.5" cy="582.9" r="1.85"/><circle cx="104.5" cy="582.9" r="1.85"/><circle cx="127.4" cy="582.9" r="1.85"/><circle cx="150.3" cy="582.9" r="1.85"/><circle cx="173.3" cy="582.9" r="1.85"/><circle cx="196.2" cy="582.9" r="1.85"/><circle cx="219.2" cy="582.9" r="1.85"/><circle cx="242.1" cy="582.9" r="1.85"/><circle cx="265.0" cy="582.9" r="1.85"/><circle cx="288.0" cy="582.9" r="1.85"/><circle cx="310.9" cy="582.9" r="1.85"/><circle cx="333.8" cy="582.9" r="1.85"/><circle cx="356.8" cy="582.9" r="1.85"/><circle cx="379.7" cy="582.9" r="1.85"/><circle cx="402.7" cy="582.9" r="1.85"/><circle cx="425.6" cy="582.9" r="1.85"/><circle cx="448.5" cy="582.9" r="1.85"/><circle cx="471.5" cy="582.9" r="1.85"/><circle cx="494.4" cy="582.9" r="1.85"/><circle cx="58.6" cy="595.1" r="1.85"/><circle cx="81.5" cy="595.1" r="1.85"/><circle cx="104.5" cy="595.1" r="1.85"/><circle cx="127.4" cy="595.1" r="1.85"/><circle cx="150.3" cy="595.1" r="1.85"/><circle cx="173.3" cy="595.1" r="1.85"/><circle cx="196.2" cy="595.1" r="1.85"/><circle cx="219.2" cy="595.1" r="1.85"/><circle cx="242.1" cy="595.1" r="1.85"/><circle cx="265.0" cy="595.1" r="1.85"/><circle cx="288.0" cy="595.1" r="1.85"/><circle cx="310.9" cy="595.1" r="1.85"/><circle cx="333.8" cy="595.1" r="1.85"/><circle cx="356.8" cy="595.1" r="1.85"/><circle cx="379.7" cy="595.1" r="1.85"/><circle cx="402.7" cy="595.1" r="1.85"/><circle cx="425.6" cy="595.1" r="1.85"/><circle cx="448.5" cy="595.1" r="1.85"/><circle cx="471.5" cy="595.1" r="1.85"/><circle cx="494.4" cy="595.1" r="1.85"/><circle cx="58.6" cy="607.3" r="1.85"/><circle cx="81.5" cy="607.3" r="1.85"/><circle cx="104.5" cy="607.3" r="1.85"/><circle cx="127.4" cy="607.3" r="1.85"/><circle cx="150.3" cy="607.3" r="1.85"/><circle cx="173.3" cy="607.3" r="1.85"/><circle cx="196.2" cy="607.3" r="1.85"/><circle cx="219.2" cy="607.3" r="1.85"/><circle cx="242.1" cy="607.3" r="1.85"/><circle cx="265.0" cy="607.3" r="1.85"/><circle cx="288.0" cy="607.3" r="1.85"/><circle cx="310.9" cy="607.3" r="1.85"/><circle cx="333.8" cy="607.3" r="1.85"/><circle cx="356.8" cy="607.3" r="1.85"/><circle cx="379.7" cy="607.3" r="1.85"/><circle cx="402.7" cy="607.3" r="1.85"/><circle cx="425.6" cy="607.3" r="1.85"/><circle cx="448.5" cy="607.3" r="1.85"/><circle cx="471.5" cy="607.3" r="1.85"/><circle cx="494.4" cy="607.3" r="1.85"/><circle cx="58.6" cy="619.5" r="1.85"/><circle cx="81.5" cy="619.5" r="1.85"/><circle cx="104.5" cy="619.5" r="1.85"/><circle cx="127.4" cy="619.5" r="1.85"/><circle cx="150.3" cy="619.5" r="1.85"/><circle cx="173.3" cy="619.5" r="1.85"/><circle cx="196.2" cy="619.5" r="1.85"/><circle cx="219.2" cy="619.5" r="1.85"/><circle cx="242.1" cy="619.5" r="1.85"/><circle cx="265.0" cy="619.5" r="1.85"/><circle cx="288.0" cy="619.5" r="1.85"/><circle cx="310.9" cy="619.5" r="1.85"/><circle cx="333.8" cy="619.5" r="1.85"/><circle cx="356.8" cy="619.5" r="1.85"/><circle cx="379.7" cy="619.5" r="1.85"/><circle cx="402.7" cy="619.5" r="1.85"/><circle cx="425.6" cy="619.5" r="1.85"/><circle cx="448.5" cy="619.5" r="1.85"/><circle cx="471.5" cy="619.5" r="1.85"/><circle cx="494.4" cy="619.5" r="1.85"/><circle cx="58.6" cy="631.7" r="1.85"/><circle cx="81.5" cy="631.7" r="1.85"/><circle cx="104.5" cy="631.7" r="1.85"/><circle cx="127.4" cy="631.7" r="1.85"/><circle cx="150.3" cy="631.7" r="1.85"/><circle cx="173.3" cy="631.7" r="1.85"/><circle cx="196.2" cy="631.7" r="1.85"/><circle cx="219.2" cy="631.7" r="1.85"/><circle cx="242.1" cy="631.7" r="1.85"/><circle cx="265.0" cy="631.7" r="1.85"/><circle cx="288.0" cy="631.7" r="1.85"/><circle cx="310.9" cy="631.7" r="1.85"/><circle cx="333.8" cy="631.7" r="1.85"/><circle cx="356.8" cy="631.7" r="1.85"/><circle cx="379.7" cy="631.7" r="1.85"/><circle cx="402.7" cy="631.7" r="1.85"/><circle cx="425.6" cy="631.7" r="1.85"/><circle cx="448.5" cy="631.7" r="1.85"/><circle cx="471.5" cy="631.7" r="1.85"/><circle cx="494.4" cy="631.7" r="1.85"/><circle cx="58.6" cy="644.0" r="1.85"/><circle cx="81.5" cy="644.0" r="1.85"/><circle cx="104.5" cy="644.0" r="1.85"/><circle cx="127.4" cy="644.0" r="1.85"/><circle cx="150.3" cy="644.0" r="1.85"/><circle cx="173.3" cy="644.0" r="1.85"/><circle cx="196.2" cy="644.0" r="1.85"/><circle cx="219.2" cy="644.0" r="1.85"/><circle cx="242.1" cy="644.0" r="1.85"/><circle cx="265.0" cy="644.0" r="1.85"/><circle cx="288.0" cy="644.0" r="1.85"/><circle cx="310.9" cy="644.0" r="1.85"/><circle cx="333.8" cy="644.0" r="1.85"/><circle cx="356.8" cy="644.0" r="1.85"/><circle cx="379.7" cy="644.0" r="1.85"/><circle cx="402.7" cy="644.0" r="1.85"/><circle cx="425.6" cy="644.0" r="1.85"/><circle cx="448.5" cy="644.0" r="1.85"/><circle cx="471.5" cy="644.0" r="1.85"/><circle cx="494.4" cy="644.0" r="1.85"/><circle cx="58.6" cy="656.2" r="1.85"/><circle cx="81.5" cy="656.2" r="1.85"/><circle cx="104.5" cy="656.2" r="1.85"/><circle cx="127.4" cy="656.2" r="1.85"/><circle cx="150.3" cy="656.2" r="1.85"/><circle cx="173.3" cy="656.2" r="1.85"/><circle cx="196.2" cy="656.2" r="1.85"/><circle cx="219.2" cy="656.2" r="1.85"/><circle cx="242.1" cy="656.2" r="1.85"/><circle cx="265.0" cy="656.2" r="1.85"/><circle cx="288.0" cy="656.2" r="1.85"/><circle cx="310.9" cy="656.2" r="1.85"/><circle cx="333.8" cy="656.2" r="1.85"/><circle cx="356.8" cy="656.2" r="1.85"/><circle cx="379.7" cy="656.2" r="1.85"/><circle cx="402.7" cy="656.2" r="1.85"/><circle cx="425.6" cy="656.2" r="1.85"/><circle cx="448.5" cy="656.2" r="1.85"/><circle cx="471.5" cy="656.2" r="1.85"/><circle cx="494.4" cy="656.2" r="1.85"/><circle cx="58.6" cy="668.4" r="1.85"/><circle cx="81.5" cy="668.4" r="1.85"/><circle cx="104.5" cy="668.4" r="1.85"/><circle cx="127.4" cy="668.4" r="1.85"/><circle cx="150.3" cy="668.4" r="1.85"/><circle cx="173.3" cy="668.4" r="1.85"/><circle cx="196.2" cy="668.4" r="1.85"/><circle cx="219.2" cy="668.4" r="1.85"/><circle cx="242.1" cy="668.4" r="1.85"/><circle cx="265.0" cy="668.4" r="1.85"/><circle cx="288.0" cy="668.4" r="1.85"/><circle cx="310.9" cy="668.4" r="1.85"/><circle cx="333.8" cy="668.4" r="1.85"/><circle cx="356.8" cy="668.4" r="1.85"/><circle cx="379.7" cy="668.4" r="1.85"/><circle cx="402.7" cy="668.4" r="1.85"/><circle cx="425.6" cy="668.4" r="1.85"/><circle cx="448.5" cy="668.4" r="1.85"/><circle cx="471.5" cy="668.4" r="1.85"/><circle cx="494.4" cy="668.4" r="1.85"/></g>
<path d="M56.8 495.5 L60.4 499.1 M60.4 495.5 L56.8 499.1 M79.7 495.5 L83.3 499.1 M83.3 495.5 L79.7 499.1 M102.7 495.5 L106.3 499.1 M106.3 495.5 L102.7 499.1 M125.6 495.5 L129.2 499.1 M129.2 495.5 L125.6 499.1 M148.5 495.5 L152.1 499.1 M152.1 495.5 L148.5 499.1 M171.5 495.5 L175.1 499.1 M175.1 495.5 L171.5 499.1 M194.4 495.5 L198.0 499.1 M198.0 495.5 L194.4 499.1 M217.4 495.5 L221.0 499.1 M221.0 495.5 L217.4 499.1 M240.3 495.5 L243.9 499.1 M243.9 495.5 L240.3 499.1 M263.2 495.5 L266.8 499.1 M266.8 495.5 L263.2 499.1 M286.2 495.5 L289.8 499.1 M289.8 495.5 L286.2 499.1 M309.1 495.5 L312.7 499.1 M312.7 495.5 L309.1 499.1 M332.0 495.5 L335.6 499.1 M335.6 495.5 L332.0 499.1 M355.0 495.5 L358.6 499.1 M358.6 495.5 L355.0 499.1 M377.9 495.5 L381.5 499.1 M381.5 495.5 L377.9 499.1 M400.9 495.5 L404.5 499.1 M404.5 495.5 L400.9 499.1 M423.8 495.5 L427.4 499.1 M427.4 495.5 L423.8 499.1 M446.7 495.5 L450.3 499.1 M450.3 495.5 L446.7 499.1 M469.7 495.5 L473.3 499.1 M473.3 495.5 L469.7 499.1 M492.6 495.5 L496.2 499.1 M496.2 495.5 L492.6 499.1 " stroke="#000" stroke-width="1.1"/>
<g fill="#000"><circle cx="58.6" cy="497.3" r="1.5"/><circle cx="81.5" cy="497.3" r="1.5"/><circle cx="104.5" cy="497.3" r="1.5"/><circle cx="127.4" cy="497.3" r="1.5"/><circle cx="150.3" cy="497.3" r="1.5"/><circle cx="173.3" cy="497.3" r="1.5"/><circle cx="196.2" cy="497.3" r="1.5"/><circle cx="219.2" cy="497.3" r="1.5"/><circle cx="242.1" cy="497.3" r="1.5"/><circle cx="265.0" cy="497.3" r="1.5"/><circle cx="288.0" cy="497.3" r="1.5"/><circle cx="310.9" cy="497.3" r="1.5"/><circle cx="333.8" cy="497.3" r="1.5"/><circle cx="356.8" cy="497.3" r="1.5"/><circle cx="379.7" cy="497.3" r="1.5"/><circle cx="402.7" cy="497.3" r="1.5"/><circle cx="425.6" cy="497.3" r="1.5"/><circle cx="448.5" cy="497.3" r="1.5"/><circle cx="471.5" cy="497.3" r="1.5"/><circle cx="494.4" cy="497.3" r="1.5"/></g>
<path d="M45 589.3 H494.4" stroke="#000" stroke-width="1" stroke-dasharray="3 2.4"/>
<rect x="45" y="430" width="463.6" height="246" fill="none" stroke="#000" stroke-width="1"/>
<text x="269" y="421.6" font-size="8.6" text-anchor="middle" fill="#0000e0">Calculated magnetic field</text>
<path d="M41 668.4 H45" stroke="#505050" stroke-width="0.9"/>
<text x="40.2" y="672.7" font-size="10" text-anchor="end">0</text>
<path d="M43 656.8 H45" stroke="#505050" stroke-width="0.9"/>
<path d="M41 645.2 H45" stroke="#505050" stroke-width="0.9"/>
<text x="40.2" y="649.5" font-size="10" text-anchor="end">10</text>
<path d="M43 633.6 H45" stroke="#505050" stroke-width="0.9"/>
<path d="M41 622.0 H45" stroke="#505050" stroke-width="0.9"/>
<text x="40.2" y="626.3" font-size="10" text-anchor="end">20</text>
<path d="M43 610.4 H45" stroke="#505050" stroke-width="0.9"/>
<path d="M41 598.8 H45" stroke="#505050" stroke-width="0.9"/>
<text x="40.2" y="603.1" font-size="10" text-anchor="end">30</text>
<path d="M43 587.1 H45" stroke="#505050" stroke-width="0.9"/>
<path d="M41 575.5 H45" stroke="#505050" stroke-width="0.9"/>
<text x="40.2" y="579.8" font-size="10" text-anchor="end">40</text>
<path d="M43 563.9 H45" stroke="#505050" stroke-width="0.9"/>
<path d="M41 552.3 H45" stroke="#505050" stroke-width="0.9"/>
<text x="40.2" y="556.6" font-size="10" text-anchor="end">50</text>
<path d="M43 540.7 H45" stroke="#505050" stroke-width="0.9"/>
<path d="M41 529.1 H45" stroke="#505050" stroke-width="0.9"/>
<text x="40.2" y="533.4" font-size="10" text-anchor="end">60</text>
<path d="M43 517.5 H45" stroke="#505050" stroke-width="0.9"/>
<path d="M41 505.9 H45" stroke="#505050" stroke-width="0.9"/>
<text x="40.2" y="510.2" font-size="10" text-anchor="end">70</text>
<path d="M43 494.3 H45" stroke="#505050" stroke-width="0.9"/>
<path d="M41 482.7 H45" stroke="#505050" stroke-width="0.9"/>
<text x="40.2" y="487.0" font-size="10" text-anchor="end">80</text>
<path d="M43 471.1 H45" stroke="#505050" stroke-width="0.9"/>
<path d="M41 459.5 H45" stroke="#505050" stroke-width="0.9"/>
<text x="40.2" y="463.8" font-size="10" text-anchor="end">90</text>
<path d="M43 447.9 H45" stroke="#505050" stroke-width="0.9"/>
<path d="M41 436.2 H45" stroke="#505050" stroke-width="0.9"/>
<text x="40.2" y="440.6" font-size="10" text-anchor="end">100</text>
<text x="0" y="0" font-size="9" transform="translate(19.5 554) rotate(-90)">y</text>
<path d="M58.6 676 V680" stroke="#505050" stroke-width="0.9"/>
<text x="58.6" y="689.6" font-size="10" text-anchor="middle">0</text>
<path d="M69.5 676 V678" stroke="#505050" stroke-width="0.9"/>
<path d="M80.4 676 V680" stroke="#505050" stroke-width="0.9"/>
<text x="80.4" y="689.6" font-size="10" text-anchor="middle">5</text>
<path d="M91.3 676 V678" stroke="#505050" stroke-width="0.9"/>
<path d="M102.2 676 V680" stroke="#505050" stroke-width="0.9"/>
<text x="102.2" y="689.6" font-size="10" text-anchor="middle">10</text>
<path d="M113.1 676 V678" stroke="#505050" stroke-width="0.9"/>
<path d="M124.0 676 V680" stroke="#505050" stroke-width="0.9"/>
<text x="124.0" y="689.6" font-size="10" text-anchor="middle">15</text>
<path d="M134.9 676 V678" stroke="#505050" stroke-width="0.9"/>
<path d="M145.8 676 V680" stroke="#505050" stroke-width="0.9"/>
<text x="145.8" y="689.6" font-size="10" text-anchor="middle">20</text>
<path d="M156.7 676 V678" stroke="#505050" stroke-width="0.9"/>
<path d="M167.6 676 V680" stroke="#505050" stroke-width="0.9"/>
<text x="167.6" y="689.6" font-size="10" text-anchor="middle">25</text>
<path d="M178.4 676 V678" stroke="#505050" stroke-width="0.9"/>
<path d="M189.3 676 V680" stroke="#505050" stroke-width="0.9"/>
<text x="189.3" y="689.6" font-size="10" text-anchor="middle">30</text>
<path d="M200.2 676 V678" stroke="#505050" stroke-width="0.9"/>
<path d="M211.1 676 V680" stroke="#505050" stroke-width="0.9"/>
<text x="211.1" y="689.6" font-size="10" text-anchor="middle">35</text>
<path d="M222.0 676 V678" stroke="#505050" stroke-width="0.9"/>
<path d="M232.9 676 V680" stroke="#505050" stroke-width="0.9"/>
<text x="232.9" y="689.6" font-size="10" text-anchor="middle">40</text>
<path d="M243.8 676 V678" stroke="#505050" stroke-width="0.9"/>
<path d="M254.7 676 V680" stroke="#505050" stroke-width="0.9"/>
<text x="254.7" y="689.6" font-size="10" text-anchor="middle">45</text>
<path d="M265.6 676 V678" stroke="#505050" stroke-width="0.9"/>
<path d="M276.5 676 V680" stroke="#505050" stroke-width="0.9"/>
<text x="276.5" y="689.6" font-size="10" text-anchor="middle">50</text>
<path d="M287.4 676 V678" stroke="#505050" stroke-width="0.9"/>
<path d="M298.3 676 V680" stroke="#505050" stroke-width="0.9"/>
<text x="298.3" y="689.6" font-size="10" text-anchor="middle">55</text>
<path d="M309.2 676 V678" stroke="#505050" stroke-width="0.9"/>
<path d="M320.1 676 V680" stroke="#505050" stroke-width="0.9"/>
<text x="320.1" y="689.6" font-size="10" text-anchor="middle">60</text>
<path d="M331.0 676 V678" stroke="#505050" stroke-width="0.9"/>
<path d="M341.9 676 V680" stroke="#505050" stroke-width="0.9"/>
<text x="341.9" y="689.6" font-size="10" text-anchor="middle">65</text>
<path d="M352.8 676 V678" stroke="#505050" stroke-width="0.9"/>
<path d="M363.7 676 V680" stroke="#505050" stroke-width="0.9"/>
<text x="363.7" y="689.6" font-size="10" text-anchor="middle">70</text>
<path d="M374.6 676 V678" stroke="#505050" stroke-width="0.9"/>
<path d="M385.4 676 V680" stroke="#505050" stroke-width="0.9"/>
<text x="385.4" y="689.6" font-size="10" text-anchor="middle">75</text>
<path d="M396.3 676 V678" stroke="#505050" stroke-width="0.9"/>
<path d="M407.2 676 V680" stroke="#505050" stroke-width="0.9"/>
<text x="407.2" y="689.6" font-size="10" text-anchor="middle">80</text>
<path d="M418.1 676 V678" stroke="#505050" stroke-width="0.9"/>
<path d="M429.0 676 V680" stroke="#505050" stroke-width="0.9"/>
<text x="429.0" y="689.6" font-size="10" text-anchor="middle">85</text>
<path d="M439.9 676 V678" stroke="#505050" stroke-width="0.9"/>
<path d="M450.8 676 V680" stroke="#505050" stroke-width="0.9"/>
<text x="450.8" y="689.6" font-size="10" text-anchor="middle">90</text>
<path d="M461.7 676 V678" stroke="#505050" stroke-width="0.9"/>
<path d="M472.6 676 V680" stroke="#505050" stroke-width="0.9"/>
<text x="472.6" y="689.6" font-size="10" text-anchor="middle">95</text>
<path d="M483.5 676 V678" stroke="#505050" stroke-width="0.9"/>
<path d="M494.4 676 V680" stroke="#505050" stroke-width="0.9"/>
<text x="494.4" y="689.6" font-size="10" text-anchor="middle">100</text>
<rect x="518" y="430.00" width="13" height="8.23" fill="rgb(0,0,255)"/>
<rect x="518" y="437.93" width="13" height="8.23" fill="rgb(0,0,255)"/>
<rect x="518" y="445.86" width="13" height="8.23" fill="rgb(0,4,244)"/>
<rect x="518" y="453.79" width="13" height="8.23" fill="rgb(0,16,212)"/>
<rect x="518" y="461.72" width="13" height="8.23" fill="rgb(0,32,177)"/>
<rect x="518" y="469.65" width="13" height="8.23" fill="rgb(0,51,144)"/>
<rect x="518" y="477.57" width="13" height="8.23" fill="rgb(0,71,114)"/>
<rect x="518" y="485.50" width="13" height="8.23" fill="rgb(0,85,87)"/>
<rect x="518" y="493.43" width="13" height="8.23" fill="rgb(0,95,62)"/>
<rect x="518" y="501.36" width="13" height="8.23" fill="rgb(0,107,37)"/>
<rect x="518" y="509.29" width="13" height="8.23" fill="rgb(0,121,13)"/>
<rect x="518" y="517.22" width="13" height="8.23" fill="rgb(15,135,0)"/>
<rect x="518" y="525.15" width="13" height="8.23" fill="rgb(45,148,0)"/>
<rect x="518" y="533.08" width="13" height="8.23" fill="rgb(72,162,0)"/>
<rect x="518" y="541.01" width="13" height="8.23" fill="rgb(97,177,0)"/>
<rect x="518" y="548.94" width="13" height="8.23" fill="rgb(124,192,0)"/>
<rect x="518" y="556.86" width="13" height="8.23" fill="rgb(154,207,0)"/>
<rect x="518" y="564.79" width="13" height="8.23" fill="rgb(180,219,0)"/>
<rect x="518" y="572.72" width="13" height="8.23" fill="rgb(202,229,0)"/>
<rect x="518" y="580.65" width="13" height="8.23" fill="rgb(227,241,0)"/>
<rect x="518" y="588.58" width="13" height="8.23" fill="rgb(255,254,0)"/>
<rect x="518" y="596.51" width="13" height="8.23" fill="rgb(255,230,0)"/>
<rect x="518" y="604.44" width="13" height="8.23" fill="rgb(255,205,0)"/>
<rect x="518" y="612.37" width="13" height="8.23" fill="rgb(255,180,0)"/>
<rect x="518" y="620.30" width="13" height="8.23" fill="rgb(255,155,0)"/>
<rect x="518" y="628.23" width="13" height="8.23" fill="rgb(255,128,0)"/>
<rect x="518" y="636.15" width="13" height="8.23" fill="rgb(255,99,0)"/>
<rect x="518" y="644.08" width="13" height="8.23" fill="rgb(255,71,0)"/>
<rect x="518" y="652.01" width="13" height="8.23" fill="rgb(255,46,0)"/>
<rect x="518" y="659.94" width="13" height="8.23" fill="rgb(255,24,0)"/>
<rect x="518" y="667.87" width="13" height="8.23" fill="rgb(255,8,0)"/>
<rect x="518" y="430" width="13" height="245.79999999999995" fill="none" stroke="#303030" stroke-width="0.8"/>
<path d="M531.4 437.9 H534.2" stroke="#ff3060" stroke-width="0.9"/>
<path d="M531.4 445.9 H533.4" stroke="#ff3060" stroke-width="0.9"/>
<path d="M531.4 453.8 H534.2" stroke="#ff3060" stroke-width="0.9"/>
<path d="M531.4 461.7 H533.4" stroke="#ff3060" stroke-width="0.9"/>
<path d="M531.4 469.6 H534.2" stroke="#ff3060" stroke-width="0.9"/>
<path d="M531.4 477.6 H533.4" stroke="#ff3060" stroke-width="0.9"/>
<path d="M531.4 485.5 H534.2" stroke="#ff3060" stroke-width="0.9"/>
<path d="M531.4 493.4 H533.4" stroke="#ff3060" stroke-width="0.9"/>
<path d="M531.4 501.4 H534.2" stroke="#ff3060" stroke-width="0.9"/>
<path d="M531.4 509.3 H533.4" stroke="#ff3060" stroke-width="0.9"/>
<path d="M531.4 517.2 H534.2" stroke="#ff3060" stroke-width="0.9"/>
<path d="M531.4 525.1 H533.4" stroke="#ff3060" stroke-width="0.9"/>
<path d="M531.4 533.1 H534.2" stroke="#3030d0" stroke-width="0.9"/>
<path d="M531.4 541.0 H533.4" stroke="#3030d0" stroke-width="0.9"/>
<path d="M531.4 548.9 H534.2" stroke="#3030d0" stroke-width="0.9"/>
<path d="M531.4 556.9 H533.4" stroke="#3030d0" stroke-width="0.9"/>
<path d="M531.4 564.8 H534.2" stroke="#3030d0" stroke-width="0.9"/>
<path d="M531.4 572.7 H533.4" stroke="#3030d0" stroke-width="0.9"/>
<path d="M531.4 580.7 H534.2" stroke="#3030d0" stroke-width="0.9"/>
<path d="M531.4 588.6 H533.4" stroke="#3030d0" stroke-width="0.9"/>
<path d="M531.4 596.5 H534.2" stroke="#3030d0" stroke-width="0.9"/>
<path d="M531.4 604.4 H533.4" stroke="#3030d0" stroke-width="0.9"/>
<path d="M531.4 612.4 H534.2" stroke="#3030d0" stroke-width="0.9"/>
<path d="M531.4 620.3 H533.4" stroke="#3030d0" stroke-width="0.9"/>
<path d="M531.4 628.2 H534.2" stroke="#3030d0" stroke-width="0.9"/>
<path d="M531.4 636.2 H533.4" stroke="#3030d0" stroke-width="0.9"/>
<path d="M531.4 644.1 H534.2" stroke="#3030d0" stroke-width="0.9"/>
<path d="M531.4 652.0 H533.4" stroke="#3030d0" stroke-width="0.9"/>
<path d="M531.4 659.9 H534.2" stroke="#3030d0" stroke-width="0.9"/>
<path d="M531.4 667.9 H533.4" stroke="#3030d0" stroke-width="0.9"/>
<text x="537" y="441.2" font-size="8.6" letter-spacing="-0.3">1040</text>
<text x="537" y="457.1" font-size="8.6" letter-spacing="-0.3">920</text>
<text x="537" y="472.9" font-size="8.6" letter-spacing="-0.3">810</text>
<text x="537" y="488.8" font-size="8.6" letter-spacing="-0.3">690</text>
<text x="537" y="504.7" font-size="8.6" letter-spacing="-0.3">570</text>
<text x="537" y="520.5" font-size="8.6" letter-spacing="-0.3">460</text>
<text x="537" y="536.4" font-size="8.6" letter-spacing="-0.3">340</text>
<text x="537" y="552.2" font-size="8.6" letter-spacing="-0.3">230</text>
<text x="537" y="568.1" font-size="8.6" letter-spacing="-0.3">110</text>
<text x="537" y="584.0" font-size="8.6" letter-spacing="-0.3">0</text>
<text x="537" y="599.8" font-size="8.6" letter-spacing="-0.3">-120</text>
<text x="537" y="615.7" font-size="8.6" letter-spacing="-0.3">-240</text>
<text x="537" y="631.5" font-size="8.6" letter-spacing="-0.3">-360</text>
<text x="537" y="647.4" font-size="8.6" letter-spacing="-0.3">-470</text>
<text x="537" y="663.2" font-size="8.6" letter-spacing="-0.3">-590</text>
<text x="517.6" y="426.6" font-size="11.5">T</text><text x="523.6" y="426.6" font-size="7">calc</text>
</svg>
<svg id="cbr" width="1024" height="720" viewBox="0 0 1024 720">
<defs><clipPath id="clipBR"><rect x="618" y="416.5" width="336.4" height="256.9"/></clipPath><clipPath id="clipBRd"><rect x="618" y="403" width="336.4" height="270.4"/></clipPath></defs>
<g clip-path="url(#clipBR)" stroke-linejoin="round">
<rect x="618" y="416.5" width="336.4" height="256.9" fill="rgb(150, 205, 0)"/>
<polygon points="618,416.5 673.3,416.5 673.3,420 672.3,429.2 667.5,437 661.7,446.7 656.8,458.3 652.9,470 648,485.5 644.2,501 641.2,516.6 639.3,535 638,546.7 636.4,571.9 633.5,576.8 618,577.4" fill="rgb(95, 175, 0)" stroke="#7a2a70" stroke-width="0.9"/>
<polygon points="618,459.9 633.5,459.9 637.4,466 638.3,481.6 637.4,501 633.5,506 618,506" fill="rgb(45, 150, 0)" stroke="#7a2a70" stroke-width="0.9"/>
<polygon points="625.7,416.5 634.4,419.4 653.9,419.4 657.8,417 657.8,416.5" fill="rgb(45, 150, 0)" stroke="#7a2a70" stroke-width="0.9"/>
<polygon points="687.9,416.5 706.4,425.3 727.8,417.5 727.8,416.5" fill="rgb(205, 230, 0)" stroke="#7a2a70" stroke-width="0.9"/>
<polygon points="752,416.5 755,422.4 759.8,427.2 766.6,427.2 769.5,419.4 768.6,416.5" fill="rgb(95, 175, 0)" stroke="#7a2a70" stroke-width="0.9"/>
<polygon points="662.6,673.4 658.7,643.9 654.9,620.5 652,597.2 651,573.9 652,554.4 654.9,535 658.7,520.5 666.5,501 679.2,477.8 692.8,458.3 705.4,449.6 723.9,456.4 741.4,462.2 757.9,472.9 763.7,485.5 765.7,501 763.7,520.5 760.8,540 755,558.3 747.2,575.8 741.4,593.3 729.7,608.9 720,622.5 706.4,641.9 694.7,659.4 687.9,673.4" fill="rgb(205, 230, 0)" stroke="#7a2a70" stroke-width="0.9"/>
<polygon points="671.4,622.5 666.5,601.1 662.6,573.9 662.6,554.4 665.5,535 669.4,524.4 679.2,505 692.8,485.5 706.4,469.6 723.9,474.8 741.4,480.7 749.1,491.4 752,508.9 751.1,526.4 749.1,540 743.3,558.3 735.5,571.9 723.9,587.5 710.3,605 705.4,608.9 687.9,614.7" fill="rgb(255, 255, 0)" stroke="#7a2a70" stroke-width="0.9"/>
<polygon points="685,570 682.7,548.6 685,535 688.9,524.4 696.6,508.9 705.4,492.3 721.9,498.2 728.7,506.9 735.5,516.6 733.6,530.2 729.7,540 721,553.5 710.3,573.9 705.4,577.4" fill="rgb(255, 205, 0)" stroke="#7a2a70" stroke-width="0.9"/>
<polygon points="725.8,673.4 731.6,651.6 739.4,632.2 751.1,616.6 760.8,593.3 768.6,573.9 773.5,554.4 778.3,535 780,524.4 783.9,497.2 788.7,468 794.6,454.4 799.4,447.6 812.1,444.7 816.9,435 826.7,423.3 829.6,416.5 900.5,416.5 906.4,427.2 908.3,442.8 916.1,466.1 923.9,481.6 935.5,505 943.3,526.4 945.2,540 949.1,558.3 951.1,583.6 952.6,612.8 953.6,651.6 954,673.4" fill="rgb(95, 175, 0)" stroke="#7a2a70" stroke-width="0.9"/>
<polygon points="739.4,673.4 745.3,651.6 755,632.2 762.7,612.8 770.5,593.3 778.3,573.9 782.2,554.4 782.9,540 787.8,508.9 793.6,485.5 799.4,473.9 809.2,462.2 826.7,446.7 846.1,434 881.1,434.6 890.8,440.8 900.5,454.4 912.2,477.8 923.9,497.2 933.6,516.6 939.4,540 943.5,558.3 947.2,583.6 949.1,612.8 951.1,651.6 952,673.4" fill="rgb(45, 150, 0)" stroke="#7a2a70" stroke-width="0.9"/>
<polygon points="835.4,416.5 838.3,421.4 846.1,429.2 865.5,432.1 885,429.2 894.7,423.3 895.7,416.5" fill="rgb(45, 150, 0)" stroke="#7a2a70" stroke-width="0.9"/>
<polygon points="842.2,416.5 848,423.3 865.5,427.2 883,423.3 887.9,416.5" fill="rgb(0, 128, 0)" stroke="#7a2a70" stroke-width="0.9"/>
<polygon points="852.9,416.5 865.5,420.4 879.1,416.5" fill="rgb(0, 100, 55)" stroke="#a02070" stroke-width="0.9"/>
<polygon points="754,673.4 759.8,651.6 766.6,632.2 774.4,612.8 780,599 785.8,585.5 789.7,564.2 793.6,540 799.4,516.6 805.3,497.2 813,481.6 826.7,466.1 846.1,449.6 881.1,451.5 888.9,458.3 900.5,477.8 912.2,497.2 921.9,516.6 929.7,540 935.5,558.3 942.3,583.6 945.2,612.8 948.1,641.9 950.1,673.4" fill="rgb(0, 128, 0)" stroke="#7a2a70" stroke-width="0.9"/>
<polygon points="770.5,673.4 773.5,655.5 778.3,640 785.8,622.5 793.6,603 799.4,573.9 804.3,540 809.2,520.5 816.9,501 828.6,481.6 847.1,462.6 881.1,467 888.9,477.8 900.5,497.2 912.2,516.6 921.9,540 931.6,554.4 935.5,583.6 939.4,612.8 943.3,641.9 946.2,673.4" fill="rgb(0, 100, 55)" stroke="#a02070" stroke-width="0.9"/>
<polygon points="783.9,673.4 791.7,643.9 801.4,618.6 807.2,593.3 811.1,564.2 815,540 820.8,520.5 830.5,499.1 847.1,477.4 881.1,482.6 888.9,493.3 900.5,512.8 916.1,540 924.8,554.4 929.7,583.6 933.6,612.8 938.4,641.9 941.4,673.4" fill="rgb(0, 75, 100)" stroke="#a02070" stroke-width="0.9"/>
<polygon points="797.5,673.4 807.2,641.9 815,618.6 819.9,593.3 822.8,564.2 826.7,540 832.5,520.5 840.3,503 847.1,492.9 883,501 890.8,512.8 900.5,528.3 906.4,540 912.2,550.5 920,560.3 922.9,573.9 924.8,593.3 928.7,622.5 933.6,651.6 936.5,673.4" fill="rgb(0, 45, 150)" stroke="#a02070" stroke-width="0.9"/>
<polygon points="813,673.4 820.8,651.6 830.5,626.4 835.4,612.8 837.3,593.3 838.3,564.2 841.2,540 844.2,526.4 849,516.6 881.1,523.4 886,530.2 890.8,540 896.6,554.4 906.4,568 918,583.6 920.9,593.3 923.9,612.8 927.7,641.9 931.6,673.4" fill="rgb(0, 20, 210)" stroke="#d01860" stroke-width="0.9"/>
<polygon points="830.5,673.4 838.3,651.6 848,628.3 853.9,620.5 858.7,616.6 861.6,599.2 865.5,585.5 870.4,571.9 877.2,564.2 882.1,563.2 885,567.1 890.8,581.7 898.6,597.2 908.3,607 919,616.6 922.9,636.1 925.8,655.5 927.7,673.4" fill="rgb(0, 0, 255)" stroke="#d01860" stroke-width="0.9"/>
<polygon points="954.4,455.4 947.2,460.3 942.3,470 942.3,481.6 947.2,501 951.1,516.6 954.4,530" fill="rgb(205, 230, 0)" stroke="#7a2a70" stroke-width="0.9"/>
</g>
<g fill="#000" clip-path="url(#clipBRd)"><circle cx="618.0" cy="416.5" r="1.9"/><circle cx="635.7" cy="416.5" r="1.9"/><circle cx="653.4" cy="416.5" r="1.9"/><circle cx="671.1" cy="416.5" r="1.9"/><circle cx="688.8" cy="416.5" r="1.9"/><circle cx="706.5" cy="416.5" r="1.9"/><circle cx="724.2" cy="416.5" r="1.9"/><circle cx="741.9" cy="416.5" r="1.9"/><circle cx="759.6" cy="416.5" r="1.9"/><circle cx="777.3" cy="416.5" r="1.9"/><circle cx="795.1" cy="416.5" r="1.9"/><circle cx="812.8" cy="416.5" r="1.9"/><circle cx="830.5" cy="416.5" r="1.9"/><circle cx="848.2" cy="416.5" r="1.9"/><circle cx="865.9" cy="416.5" r="1.9"/><circle cx="883.6" cy="416.5" r="1.9"/><circle cx="901.3" cy="416.5" r="1.9"/><circle cx="919.0" cy="416.5" r="1.9"/><circle cx="936.7" cy="416.5" r="1.9"/><circle cx="954.4" cy="416.5" r="1.9"/><circle cx="618.0" cy="423.7" r="1.9"/><circle cx="635.7" cy="423.7" r="1.9"/><circle cx="653.4" cy="423.7" r="1.9"/><circle cx="671.1" cy="423.7" r="1.9"/><circle cx="688.8" cy="423.7" r="1.9"/><circle cx="706.5" cy="423.7" r="1.9"/><circle cx="724.2" cy="423.7" r="1.9"/><circle cx="741.9" cy="423.7" r="1.9"/><circle cx="759.6" cy="423.7" r="1.9"/><circle cx="777.3" cy="423.7" r="1.9"/><circle cx="795.1" cy="423.7" r="1.9"/><circle cx="812.8" cy="423.7" r="1.9"/><circle cx="830.5" cy="423.7" r="1.9"/><circle cx="848.2" cy="423.7" r="1.9"/><circle cx="865.9" cy="423.7" r="1.9"/><circle cx="883.6" cy="423.7" r="1.9"/><circle cx="901.3" cy="423.7" r="1.9"/><circle cx="919.0" cy="423.7" r="1.9"/><circle cx="936.7" cy="423.7" r="1.9"/><circle cx="954.4" cy="423.7" r="1.9"/><circle cx="618.0" cy="431.1" r="1.9"/><circle cx="635.7" cy="431.1" r="1.9"/><circle cx="653.4" cy="431.1" r="1.9"/><circle cx="671.1" cy="431.1" r="1.9"/><circle cx="688.8" cy="431.1" r="1.9"/><circle cx="706.5" cy="431.1" r="1.9"/><circle cx="724.2" cy="431.1" r="1.9"/><circle cx="741.9" cy="431.1" r="1.9"/><circle cx="759.6" cy="431.1" r="1.9"/><circle cx="777.3" cy="431.1" r="1.9"/><circle cx="795.1" cy="431.1" r="1.9"/><circle cx="812.8" cy="431.1" r="1.9"/><circle cx="830.5" cy="431.1" r="1.9"/><circle cx="848.2" cy="431.1" r="1.9"/><circle cx="865.9" cy="431.1" r="1.9"/><circle cx="883.6" cy="431.1" r="1.9"/><circle cx="901.3" cy="431.1" r="1.9"/><circle cx="919.0" cy="431.1" r="1.9"/><circle cx="936.7" cy="431.1" r="1.9"/><circle cx="954.4" cy="431.1" r="1.9"/><circle cx="618.0" cy="440.2" r="1.9"/><circle cx="635.7" cy="440.2" r="1.9"/><circle cx="653.4" cy="440.2" r="1.9"/><circle cx="671.1" cy="440.2" r="1.9"/><circle cx="688.8" cy="440.2" r="1.9"/><circle cx="706.5" cy="440.2" r="1.9"/><circle cx="724.2" cy="440.2" r="1.9"/><circle cx="741.9" cy="440.2" r="1.9"/><circle cx="759.6" cy="440.2" r="1.9"/><circle cx="777.3" cy="440.2" r="1.9"/><circle cx="795.1" cy="440.2" r="1.9"/><circle cx="812.8" cy="440.2" r="1.9"/><circle cx="830.5" cy="440.2" r="1.9"/><circle cx="848.2" cy="440.2" r="1.9"/><circle cx="865.9" cy="440.2" r="1.9"/><circle cx="883.6" cy="440.2" r="1.9"/><circle cx="901.3" cy="440.2" r="1.9"/><circle cx="919.0" cy="440.2" r="1.9"/><circle cx="936.7" cy="440.2" r="1.9"/><circle cx="954.4" cy="440.2" r="1.9"/><circle cx="618.0" cy="449.4" r="1.9"/><circle cx="635.7" cy="449.4" r="1.9"/><circle cx="653.4" cy="449.4" r="1.9"/><circle cx="671.1" cy="449.4" r="1.9"/><circle cx="688.8" cy="449.4" r="1.9"/><circle cx="706.5" cy="449.4" r="1.9"/><circle cx="724.2" cy="449.4" r="1.9"/><circle cx="741.9" cy="449.4" r="1.9"/><circle cx="759.6" cy="449.4" r="1.9"/><circle cx="777.3" cy="449.4" r="1.9"/><circle cx="795.1" cy="449.4" r="1.9"/><circle cx="812.8" cy="449.4" r="1.9"/><circle cx="830.5" cy="449.4" r="1.9"/><circle cx="848.2" cy="449.4" r="1.9"/><circle cx="865.9" cy="449.4" r="1.9"/><circle cx="883.6" cy="449.4" r="1.9"/><circle cx="901.3" cy="449.4" r="1.9"/><circle cx="919.0" cy="449.4" r="1.9"/><circle cx="936.7" cy="449.4" r="1.9"/><circle cx="954.4" cy="449.4" r="1.9"/><circle cx="618.0" cy="460.5" r="1.9"/><circle cx="635.7" cy="460.5" r="1.9"/><circle cx="653.4" cy="460.5" r="1.9"/><circle cx="671.1" cy="460.5" r="1.9"/><circle cx="688.8" cy="460.5" r="1.9"/><circle cx="706.5" cy="460.5" r="1.9"/><circle cx="724.2" cy="460.5" r="1.9"/><circle cx="741.9" cy="460.5" r="1.9"/><circle cx="759.6" cy="460.5" r="1.9"/><circle cx="777.3" cy="460.5" r="1.9"/><circle cx="795.1" cy="460.5" r="1.9"/><circle cx="812.8" cy="460.5" r="1.9"/><circle cx="830.5" cy="460.5" r="1.9"/><circle cx="848.2" cy="460.5" r="1.9"/><circle cx="865.9" cy="460.5" r="1.9"/><circle cx="883.6" cy="460.5" r="1.9"/><circle cx="901.3" cy="460.5" r="1.9"/><circle cx="919.0" cy="460.5" r="1.9"/><circle cx="936.7" cy="460.5" r="1.9"/><circle cx="954.4" cy="460.5" r="1.9"/><circle cx="618.0" cy="471.5" r="1.9"/><circle cx="635.7" cy="471.5" r="1.9"/><circle cx="653.4" cy="471.5" r="1.9"/><circle cx="671.1" cy="471.5" r="1.9"/><circle cx="688.8" cy="471.5" r="1.9"/><circle cx="706.5" cy="471.5" r="1.9"/><circle cx="724.2" cy="471.5" r="1.9"/><circle cx="741.9" cy="471.5" r="1.9"/><circle cx="759.6" cy="471.5" r="1.9"/><circle cx="777.3" cy="471.5" r="1.9"/><circle cx="795.1" cy="471.5" r="1.9"/><circle cx="812.8" cy="471.5" r="1.9"/><circle cx="830.5" cy="471.5" r="1.9"/><circle cx="848.2" cy="471.5" r="1.9"/><circle cx="865.9" cy="471.5" r="1.9"/><circle cx="883.6" cy="471.5" r="1.9"/><circle cx="901.3" cy="471.5" r="1.9"/><circle cx="919.0" cy="471.5" r="1.9"/><circle cx="936.7" cy="471.5" r="1.9"/><circle cx="954.4" cy="471.5" r="1.9"/><circle cx="618.0" cy="484.4" r="1.9"/><circle cx="635.7" cy="484.4" r="1.9"/><circle cx="653.4" cy="484.4" r="1.9"/><circle cx="671.1" cy="484.4" r="1.9"/><circle cx="688.8" cy="484.4" r="1.9"/><circle cx="706.5" cy="484.4" r="1.9"/><circle cx="724.2" cy="484.4" r="1.9"/><circle cx="741.9" cy="484.4" r="1.9"/><circle cx="759.6" cy="484.4" r="1.9"/><circle cx="777.3" cy="484.4" r="1.9"/><circle cx="795.1" cy="484.4" r="1.9"/><circle cx="812.8" cy="484.4" r="1.9"/><circle cx="830.5" cy="484.4" r="1.9"/><circle cx="848.2" cy="484.4" r="1.9"/><circle cx="865.9" cy="484.4" r="1.9"/><circle cx="883.6" cy="484.4" r="1.9"/><circle cx="901.3" cy="484.4" r="1.9"/><circle cx="919.0" cy="484.4" r="1.9"/><circle cx="936.7" cy="484.4" r="1.9"/><circle cx="954.4" cy="484.4" r="1.9"/><circle cx="618.0" cy="498.0" r="1.9"/><circle cx="635.7" cy="498.0" r="1.9"/><circle cx="653.4" cy="498.0" r="1.9"/><circle cx="671.1" cy="498.0" r="1.9"/><circle cx="688.8" cy="498.0" r="1.9"/><circle cx="706.5" cy="498.0" r="1.9"/><circle cx="724.2" cy="498.0" r="1.9"/><circle cx="741.9" cy="498.0" r="1.9"/><circle cx="759.6" cy="498.0" r="1.9"/><circle cx="777.3" cy="498.0" r="1.9"/><circle cx="795.1" cy="498.0" r="1.9"/><circle cx="812.8" cy="498.0" r="1.9"/><circle cx="830.5" cy="498.0" r="1.9"/><circle cx="848.2" cy="498.0" r="1.9"/><circle cx="865.9" cy="498.0" r="1.9"/><circle cx="883.6" cy="498.0" r="1.9"/><circle cx="901.3" cy="498.0" r="1.9"/><circle cx="919.0" cy="498.0" r="1.9"/><circle cx="936.7" cy="498.0" r="1.9"/><circle cx="954.4" cy="498.0" r="1.9"/><circle cx="618.0" cy="513.3" r="1.9"/><circle cx="635.7" cy="513.3" r="1.9"/><circle cx="653.4" cy="513.3" r="1.9"/><circle cx="671.1" cy="513.3" r="1.9"/><circle cx="688.8" cy="513.3" r="1.9"/><circle cx="706.5" cy="513.3" r="1.9"/><circle cx="724.2" cy="513.3" r="1.9"/><circle cx="741.9" cy="513.3" r="1.9"/><circle cx="759.6" cy="513.3" r="1.9"/><circle cx="777.3" cy="513.3" r="1.9"/><circle cx="795.1" cy="513.3" r="1.9"/><circle cx="812.8" cy="513.3" r="1.9"/><circle cx="830.5" cy="513.3" r="1.9"/><circle cx="848.2" cy="513.3" r="1.9"/><circle cx="865.9" cy="513.3" r="1.9"/><circle cx="883.6" cy="513.3" r="1.9"/><circle cx="901.3" cy="513.3" r="1.9"/><circle cx="919.0" cy="513.3" r="1.9"/><circle cx="936.7" cy="513.3" r="1.9"/><circle cx="954.4" cy="513.3" r="1.9"/><circle cx="618.0" cy="531.2" r="1.9"/><circle cx="635.7" cy="531.2" r="1.9"/><circle cx="653.4" cy="531.2" r="1.9"/><circle cx="671.1" cy="531.2" r="1.9"/><circle cx="688.8" cy="531.2" r="1.9"/><circle cx="706.5" cy="531.2" r="1.9"/><circle cx="724.2" cy="531.2" r="1.9"/><circle cx="741.9" cy="531.2" r="1.9"/><circle cx="759.6" cy="531.2" r="1.9"/><circle cx="777.3" cy="531.2" r="1.9"/><circle cx="795.1" cy="531.2" r="1.9"/><circle cx="812.8" cy="531.2" r="1.9"/><circle cx="830.5" cy="531.2" r="1.9"/><circle cx="848.2" cy="531.2" r="1.9"/><circle cx="865.9" cy="531.2" r="1.9"/><circle cx="883.6" cy="531.2" r="1.9"/><circle cx="901.3" cy="531.2" r="1.9"/><circle cx="919.0" cy="531.2" r="1.9"/><circle cx="936.7" cy="531.2" r="1.9"/><circle cx="954.4" cy="531.2" r="1.9"/><circle cx="618.0" cy="549.4" r="1.9"/><circle cx="635.7" cy="549.4" r="1.9"/><circle cx="653.4" cy="549.4" r="1.9"/><circle cx="671.1" cy="549.4" r="1.9"/><circle cx="688.8" cy="549.4" r="1.9"/><circle cx="706.5" cy="549.4" r="1.9"/><circle cx="724.2" cy="549.4" r="1.9"/><circle cx="741.9" cy="549.4" r="1.9"/><circle cx="759.6" cy="549.4" r="1.9"/><circle cx="777.3" cy="549.4" r="1.9"/><circle cx="795.1" cy="549.4" r="1.9"/><circle cx="812.8" cy="549.4" r="1.9"/><circle cx="830.5" cy="549.4" r="1.9"/><circle cx="848.2" cy="549.4" r="1.9"/><circle cx="865.9" cy="549.4" r="1.9"/><circle cx="883.6" cy="549.4" r="1.9"/><circle cx="901.3" cy="549.4" r="1.9"/><circle cx="919.0" cy="549.4" r="1.9"/><circle cx="936.7" cy="549.4" r="1.9"/><circle cx="954.4" cy="549.4" r="1.9"/><circle cx="618.0" cy="569.5" r="1.9"/><circle cx="635.7" cy="569.5" r="1.9"/><circle cx="653.4" cy="569.5" r="1.9"/><circle cx="671.1" cy="569.5" r="1.9"/><circle cx="688.8" cy="569.5" r="1.9"/><circle cx="706.5" cy="569.5" r="1.9"/><circle cx="724.2" cy="569.5" r="1.9"/><circle cx="741.9" cy="569.5" r="1.9"/><circle cx="759.6" cy="569.5" r="1.9"/><circle cx="777.3" cy="569.5" r="1.9"/><circle cx="795.1" cy="569.5" r="1.9"/><circle cx="812.8" cy="569.5" r="1.9"/><circle cx="830.5" cy="569.5" r="1.9"/><circle cx="848.2" cy="569.5" r="1.9"/><circle cx="865.9" cy="569.5" r="1.9"/><circle cx="883.6" cy="569.5" r="1.9"/><circle cx="901.3" cy="569.5" r="1.9"/><circle cx="919.0" cy="569.5" r="1.9"/><circle cx="936.7" cy="569.5" r="1.9"/><circle cx="954.4" cy="569.5" r="1.9"/><circle cx="618.0" cy="592.6" r="1.9"/><circle cx="635.7" cy="592.6" r="1.9"/><circle cx="653.4" cy="592.6" r="1.9"/><circle cx="671.1" cy="592.6" r="1.9"/><circle cx="688.8" cy="592.6" r="1.9"/><circle cx="706.5" cy="592.6" r="1.9"/><circle cx="724.2" cy="592.6" r="1.9"/><circle cx="741.9" cy="592.6" r="1.9"/><circle cx="759.6" cy="592.6" r="1.9"/><circle cx="777.3" cy="592.6" r="1.9"/><circle cx="795.1" cy="592.6" r="1.9"/><circle cx="812.8" cy="592.6" r="1.9"/><circle cx="830.5" cy="592.6" r="1.9"/><circle cx="848.2" cy="592.6" r="1.9"/><circle cx="865.9" cy="592.6" r="1.9"/><circle cx="883.6" cy="592.6" r="1.9"/><circle cx="901.3" cy="592.6" r="1.9"/><circle cx="919.0" cy="592.6" r="1.9"/><circle cx="936.7" cy="592.6" r="1.9"/><circle cx="954.4" cy="592.6" r="1.9"/><circle cx="618.0" cy="617.4" r="1.9"/><circle cx="635.7" cy="617.4" r="1.9"/><circle cx="653.4" cy="617.4" r="1.9"/><circle cx="671.1" cy="617.4" r="1.9"/><circle cx="688.8" cy="617.4" r="1.9"/><circle cx="706.5" cy="617.4" r="1.9"/><circle cx="724.2" cy="617.4" r="1.9"/><circle cx="741.9" cy="617.4" r="1.9"/><circle cx="759.6" cy="617.4" r="1.9"/><circle cx="777.3" cy="617.4" r="1.9"/><circle cx="795.1" cy="617.4" r="1.9"/><circle cx="812.8" cy="617.4" r="1.9"/><circle cx="830.5" cy="617.4" r="1.9"/><circle cx="848.2" cy="617.4" r="1.9"/><circle cx="865.9" cy="617.4" r="1.9"/><circle cx="883.6" cy="617.4" r="1.9"/><circle cx="901.3" cy="617.4" r="1.9"/><circle cx="919.0" cy="617.4" r="1.9"/><circle cx="936.7" cy="617.4" r="1.9"/><circle cx="954.4" cy="617.4" r="1.9"/><circle cx="618.0" cy="643.9" r="1.9"/><circle cx="635.7" cy="643.9" r="1.9"/><circle cx="653.4" cy="643.9" r="1.9"/><circle cx="671.1" cy="643.9" r="1.9"/><circle cx="688.8" cy="643.9" r="1.9"/><circle cx="706.5" cy="643.9" r="1.9"/><circle cx="724.2" cy="643.9" r="1.9"/><circle cx="741.9" cy="643.9" r="1.9"/><circle cx="759.6" cy="643.9" r="1.9"/><circle cx="777.3" cy="643.9" r="1.9"/><circle cx="795.1" cy="643.9" r="1.9"/><circle cx="812.8" cy="643.9" r="1.9"/><circle cx="830.5" cy="643.9" r="1.9"/><circle cx="848.2" cy="643.9" r="1.9"/><circle cx="865.9" cy="643.9" r="1.9"/><circle cx="883.6" cy="643.9" r="1.9"/><circle cx="901.3" cy="643.9" r="1.9"/><circle cx="919.0" cy="643.9" r="1.9"/><circle cx="936.7" cy="643.9" r="1.9"/><circle cx="954.4" cy="643.9" r="1.9"/><circle cx="618.0" cy="673.4" r="1.9"/><circle cx="635.7" cy="673.4" r="1.9"/><circle cx="653.4" cy="673.4" r="1.9"/><circle cx="671.1" cy="673.4" r="1.9"/><circle cx="688.8" cy="673.4" r="1.9"/><circle cx="706.5" cy="673.4" r="1.9"/><circle cx="724.2" cy="673.4" r="1.9"/><circle cx="741.9" cy="673.4" r="1.9"/><circle cx="759.6" cy="673.4" r="1.9"/><circle cx="777.3" cy="673.4" r="1.9"/><circle cx="795.1" cy="673.4" r="1.9"/><circle cx="812.8" cy="673.4" r="1.9"/><circle cx="830.5" cy="673.4" r="1.9"/><circle cx="848.2" cy="673.4" r="1.9"/><circle cx="865.9" cy="673.4" r="1.9"/><circle cx="883.6" cy="673.4" r="1.9"/><circle cx="901.3" cy="673.4" r="1.9"/><circle cx="919.0" cy="673.4" r="1.9"/><circle cx="936.7" cy="673.4" r="1.9"/><circle cx="954.4" cy="673.4" r="1.9"/></g>
<rect x="618" y="403" width="336.4" height="270.6" fill="none" stroke="#000" stroke-width="1"/>
<text x="777.5" y="394.6" font-size="8.6" text-anchor="middle" fill="#0000e0" textLength="133" lengthAdjust="spacingAndGlyphs">Susceptibility block-section XZ, 18.4</text>
<path d="M614 416.5 H618" stroke="#505050" stroke-width="0.9"/>
<text x="613.6" y="420.9" font-size="10" text-anchor="end">0</text>
<path d="M616 428.4 H618" stroke="#505050" stroke-width="0.9"/>
<path d="M614 440.4 H618" stroke="#505050" stroke-width="0.9"/>
<text x="613.6" y="444.8" font-size="10" text-anchor="end">10</text>
<path d="M616 452.2 H618" stroke="#505050" stroke-width="0.9"/>
<path d="M614 464.2 H618" stroke="#505050" stroke-width="0.9"/>
<text x="613.6" y="468.6" font-size="10" text-anchor="end">20</text>
<path d="M616 476.1 H618" stroke="#505050" stroke-width="0.9"/>
<path d="M614 488.1 H618" stroke="#505050" stroke-width="0.9"/>
<text x="613.6" y="492.4" font-size="10" text-anchor="end">30</text>
<path d="M616 499.9 H618" stroke="#505050" stroke-width="0.9"/>
<path d="M614 511.9 H618" stroke="#505050" stroke-width="0.9"/>
<text x="613.6" y="516.3" font-size="10" text-anchor="end">40</text>
<path d="M616 523.8 H618" stroke="#505050" stroke-width="0.9"/>
<path d="M614 535.8 H618" stroke="#505050" stroke-width="0.9"/>
<text x="613.6" y="540.1" font-size="10" text-anchor="end">50</text>
<path d="M616 547.6 H618" stroke="#505050" stroke-width="0.9"/>
<path d="M614 559.6 H618" stroke="#505050" stroke-width="0.9"/>
<text x="613.6" y="564.0" font-size="10" text-anchor="end">60</text>
<path d="M616 571.5 H618" stroke="#505050" stroke-width="0.9"/>
<path d="M614 583.5 H618" stroke="#505050" stroke-width="0.9"/>
<text x="613.6" y="587.9" font-size="10" text-anchor="end">70</text>
<path d="M616 595.4 H618" stroke="#505050" stroke-width="0.9"/>
<path d="M614 607.3 H618" stroke="#505050" stroke-width="0.9"/>
<text x="613.6" y="611.7" font-size="10" text-anchor="end">80</text>
<path d="M616 619.2 H618" stroke="#505050" stroke-width="0.9"/>
<path d="M614 631.1 H618" stroke="#505050" stroke-width="0.9"/>
<text x="613.6" y="635.5" font-size="10" text-anchor="end">90</text>
<path d="M616 643.0 H618" stroke="#505050" stroke-width="0.9"/>
<path d="M614 655.0 H618" stroke="#505050" stroke-width="0.9"/>
<text x="613.6" y="659.4" font-size="10" text-anchor="end">100</text>
<text x="0" y="0" font-size="9" transform="translate(591.5 547.5) rotate(-90)">z</text>
<path d="M618.0 673.6 V677.6" stroke="#505050" stroke-width="0.9"/>
<text x="618.0" y="689.2" font-size="10" text-anchor="middle">0</text>
<path d="M634.8 673.6 V675.8" stroke="#505050" stroke-width="0.9"/>
<path d="M651.6 673.6 V677.6" stroke="#505050" stroke-width="0.9"/>
<text x="651.6" y="689.2" font-size="10" text-anchor="middle">10</text>
<path d="M668.5 673.6 V675.8" stroke="#505050" stroke-width="0.9"/>
<path d="M685.3 673.6 V677.6" stroke="#505050" stroke-width="0.9"/>
<text x="685.3" y="689.2" font-size="10" text-anchor="middle">20</text>
<path d="M702.1 673.6 V675.8" stroke="#505050" stroke-width="0.9"/>
<path d="M718.9 673.6 V677.6" stroke="#505050" stroke-width="0.9"/>
<text x="718.9" y="689.2" font-size="10" text-anchor="middle">30</text>
<path d="M735.7 673.6 V675.8" stroke="#505050" stroke-width="0.9"/>
<path d="M752.6 673.6 V677.6" stroke="#505050" stroke-width="0.9"/>
<text x="752.6" y="689.2" font-size="10" text-anchor="middle">40</text>
<path d="M769.4 673.6 V675.8" stroke="#505050" stroke-width="0.9"/>
<path d="M786.2 673.6 V677.6" stroke="#505050" stroke-width="0.9"/>
<text x="786.2" y="689.2" font-size="10" text-anchor="middle">50</text>
<path d="M803.0 673.6 V675.8" stroke="#505050" stroke-width="0.9"/>
<path d="M819.8 673.6 V677.6" stroke="#505050" stroke-width="0.9"/>
<text x="819.8" y="689.2" font-size="10" text-anchor="middle">60</text>
<path d="M836.7 673.6 V675.8" stroke="#505050" stroke-width="0.9"/>
<path d="M853.5 673.6 V677.6" stroke="#505050" stroke-width="0.9"/>
<text x="853.5" y="689.2" font-size="10" text-anchor="middle">70</text>
<path d="M870.3 673.6 V675.8" stroke="#505050" stroke-width="0.9"/>
<path d="M887.1 673.6 V677.6" stroke="#505050" stroke-width="0.9"/>
<text x="887.1" y="689.2" font-size="10" text-anchor="middle">80</text>
<path d="M903.9 673.6 V675.8" stroke="#505050" stroke-width="0.9"/>
<path d="M920.8 673.6 V677.6" stroke="#505050" stroke-width="0.9"/>
<text x="920.8" y="689.2" font-size="10" text-anchor="middle">90</text>
<path d="M937.6 673.6 V675.8" stroke="#505050" stroke-width="0.9"/>
<path d="M954.4 673.6 V677.6" stroke="#505050" stroke-width="0.9"/>
<text x="954.4" y="689.2" font-size="10" text-anchor="middle">100</text>
<rect x="963.8" y="403.00" width="13" height="17.21" fill="rgb(0, 0, 255)"/>
<rect x="963.8" y="419.91" width="13" height="17.21" fill="rgb(0, 20, 210)"/>
<rect x="963.8" y="436.82" width="13" height="17.21" fill="rgb(0, 45, 150)"/>
<rect x="963.8" y="453.74" width="13" height="17.21" fill="rgb(0, 75, 100)"/>
<rect x="963.8" y="470.65" width="13" height="17.21" fill="rgb(0, 100, 55)"/>
<rect x="963.8" y="487.56" width="13" height="17.21" fill="rgb(0, 128, 0)"/>
<rect x="963.8" y="504.48" width="13" height="17.21" fill="rgb(45, 150, 0)"/>
<rect x="963.8" y="521.39" width="13" height="17.21" fill="rgb(95, 175, 0)"/>
<rect x="963.8" y="538.30" width="13" height="17.21" fill="rgb(150, 205, 0)"/>
<rect x="963.8" y="555.21" width="13" height="17.21" fill="rgb(205, 230, 0)"/>
<rect x="963.8" y="572.12" width="13" height="17.21" fill="rgb(255, 255, 0)"/>
<rect x="963.8" y="589.04" width="13" height="17.21" fill="rgb(255, 205, 0)"/>
<rect x="963.8" y="605.95" width="13" height="17.21" fill="rgb(255, 150, 0)"/>
<rect x="963.8" y="622.86" width="13" height="17.21" fill="rgb(255, 100, 0)"/>
<rect x="963.8" y="639.78" width="13" height="17.21" fill="rgb(255, 50, 0)"/>
<rect x="963.8" y="656.69" width="13" height="17.21" fill="rgb(255, 0, 0)"/>
<rect x="963.8" y="403" width="13" height="270.6" fill="none" stroke="#303030" stroke-width="0.8"/>
<path d="M977.2 419.9 H980.4" stroke="#ff3060" stroke-width="0.9"/>
<text x="983.6" y="423.1" font-size="8.6" letter-spacing="-0.3">58</text>
<path d="M977.2 436.8 H980.4" stroke="#ff3060" stroke-width="0.9"/>
<text x="983.6" y="440.0" font-size="8.6" letter-spacing="-0.3">49</text>
<path d="M977.2 453.7 H980.4" stroke="#ff3060" stroke-width="0.9"/>
<text x="983.6" y="456.9" font-size="8.6" letter-spacing="-0.3">40</text>
<path d="M977.2 470.6 H980.4" stroke="#ff3060" stroke-width="0.9"/>
<text x="983.6" y="473.8" font-size="8.6" letter-spacing="-0.3">32</text>
<path d="M977.2 487.6 H980.4" stroke="#ff3060" stroke-width="0.9"/>
<text x="983.6" y="490.8" font-size="8.6" letter-spacing="-0.3">23</text>
<path d="M977.2 504.5 H980.4" stroke="#ff3060" stroke-width="0.9"/>
<text x="983.6" y="507.7" font-size="8.6" letter-spacing="-0.3">14</text>
<path d="M977.2 521.4 H980.4" stroke="#ff3060" stroke-width="0.9"/>
<text x="983.6" y="524.6" font-size="8.6" letter-spacing="-0.3">6</text>
<path d="M977.2 538.3 H980.4" stroke="#ff3060" stroke-width="0.9"/>
<text x="983.6" y="541.5" font-size="8.6" letter-spacing="-0.3">0</text>
<path d="M977.2 555.2 H980.4" stroke="#3030d0" stroke-width="0.9"/>
<text x="983.6" y="558.4" font-size="8.6" letter-spacing="-0.3">-12</text>
<path d="M977.2 572.1 H980.4" stroke="#3030d0" stroke-width="0.9"/>
<text x="983.6" y="575.3" font-size="8.6" letter-spacing="-0.3">-21</text>
<path d="M977.2 589.0 H980.4" stroke="#3030d0" stroke-width="0.9"/>
<text x="983.6" y="592.2" font-size="8.6" letter-spacing="-0.3">-29</text>
<path d="M977.2 606.0 H980.4" stroke="#3030d0" stroke-width="0.9"/>
<text x="983.6" y="609.2" font-size="8.6" letter-spacing="-0.3">-38</text>
<path d="M977.2 622.9 H980.4" stroke="#3030d0" stroke-width="0.9"/>
<text x="983.6" y="626.1" font-size="8.6" letter-spacing="-0.3">-47</text>
<path d="M977.2 639.8 H980.4" stroke="#3030d0" stroke-width="0.9"/>
<text x="983.6" y="643.0" font-size="8.6" letter-spacing="-0.3">-56</text>
<path d="M977.2 656.7 H980.4" stroke="#3030d0" stroke-width="0.9"/>
<text x="983.6" y="659.9" font-size="8.6" letter-spacing="-0.3">-64</text>
<text x="963.6" y="400.6" font-size="9">ρ</text><text x="968.4" y="400.6" font-size="6.6">m</text>
</svg>
<svg id="v3d" width="1024" height="720" viewBox="0 0 1024 720">
<defs>
<clipPath id="clip3d"><rect x="5" y="67" width="569" height="341"/></clipPath>
<clipPath id="cTop"><polygon points="155.7,126.2 353.9,92.1 468.5,164.4 232.4,216.3"/></clipPath>
<clipPath id="cFront"><polygon points="232.4,216.3 468.5,164.4 450.2,317.6 240.2,383"/></clipPath>
<clipPath id="cLeft"><polygon points="155.7,126.2 232.4,216.3 240.2,383 169,267.7"/></clipPath>
<filter id="cmTop" x="0" y="0" width="1" height="1" color-interpolation-filters="sRGB"><feComponentTransfer><feFuncR type="table" tableValues="0.890 0.890 0.890 0.890 0.890 0.890 0.890 0.890 0.890 0.890 0.890 0.890 0.890 0.875 0.859 0.844 0.828 0.813 0.797 0.782 0.766 0.724 0.690 0.655 0.620 0.580 0.541 0.501 0.459 0.417 0.375 0.333 0.291 0.252 0.214 0.176 0.138 0.103 0.069 0.034 0.000 0.000 0.000 0.000 0.000 0.000 0.000 0.000 0.000 0.000 0.000 0.000 0.000 0.000 0.000 0.000 0.000 0.000 0.000 0.000 0.000"/><feFuncG type="table" tableValues="0.000 0.044 0.087 0.131 0.175 0.218 0.262 0.305 0.349 0.393 0.436 0.480 0.524 0.562 0.598 0.633 0.666 0.693 0.719 0.743 0.766 0.743 0.727 0.711 0.695 0.679 0.663 0.646 0.627 0.604 0.581 0.558 0.535 0.516 0.497 0.478 0.459 0.442 0.425 0.408 0.392 0.370 0.349 0.327 0.306 0.287 0.268 0.249 0.229 0.206 0.184 0.161 0.138 0.119 0.099 0.080 0.061 0.046 0.031 0.015 0.000"/><feFuncB type="table" tableValues="0.000 0.000 0.000 0.000 0.000 0.000 0.000 0.000 0.000 0.000 0.000 0.000 0.000 0.000 0.000 0.000 0.000 0.000 0.000 0.000 0.000 0.000 0.000 0.000 0.000 0.000 0.000 0.000 0.000 0.000 0.000 0.000 0.000 0.000 0.000 0.000 0.000 0.000 0.000 0.000 0.000 0.042 0.084 0.126 0.168 0.203 0.237 0.271 0.306 0.344 0.382 0.421 0.459 0.505 0.551 0.596 0.642 0.677 0.711 0.746 0.780"/></feComponentTransfer></filter>
<filter id="cmFront" x="0" y="0" width="1" height="1" color-interpolation-filters="sRGB"><feComponentTransfer><feFuncR type="table" tableValues="1.000 1.000 1.000 1.000 1.000 1.000 1.000 1.000 1.000 1.000 1.000 1.000 1.000 1.000 1.000 1.000 1.000 1.000 1.000 1.000 1.000 0.951 0.902 0.853 0.804 0.750 0.696 0.642 0.588 0.534 0.480 0.426 0.373 0.324 0.275 0.225 0.176 0.132 0.088 0.044 0.000 0.000 0.000 0.000 0.000 0.000 0.000 0.000 0.000 0.000 0.000 0.000 0.000 0.000 0.000 0.000 0.000 0.000 0.000 0.000 0.000"/><feFuncG type="table" tableValues="0.000 0.049 0.098 0.147 0.196 0.245 0.294 0.343 0.392 0.441 0.490 0.539 0.588 0.642 0.696 0.750 0.804 0.853 0.902 0.951 1.000 0.975 0.951 0.926 0.902 0.877 0.853 0.828 0.804 0.775 0.745 0.716 0.686 0.662 0.637 0.613 0.588 0.567 0.545 0.524 0.502 0.475 0.447 0.420 0.392 0.368 0.343 0.319 0.294 0.265 0.235 0.206 0.176 0.152 0.127 0.103 0.078 0.059 0.039 0.020 0.000"/><feFuncB type="table" tableValues="0.000 0.000 0.000 0.000 0.000 0.000 0.000 0.000 0.000 0.000 0.000 0.000 0.000 0.000 0.000 0.000 0.000 0.000 0.000 0.000 0.000 0.000 0.000 0.000 0.000 0.000 0.000 0.000 0.000 0.000 0.000 0.000 0.000 0.000 0.000 0.000 0.000 0.000 0.000 0.000 0.000 0.054 0.108 0.162 0.216 0.260 0.304 0.348 0.392 0.441 0.490 0.539 0.588 0.647 0.706 0.765 0.824 0.868 0.912 0.956 1.000"/></feComponentTransfer></filter>
<filter id="d1_5" x="-1" y="-1" width="3" height="3" color-interpolation-filters="sRGB"><feGaussianBlur stdDeviation="1.5"/></filter>
<filter id="d2" x="-1" y="-1" width="3" height="3" color-interpolation-filters="sRGB"><feGaussianBlur stdDeviation="2"/></filter>
<filter id="d3" x="-1" y="-1" width="3" height="3" color-interpolation-filters="sRGB"><feGaussianBlur stdDeviation="3"/></filter>
<filter id="d4" x="-1" y="-1" width="3" height="3" color-interpolation-filters="sRGB"><feGaussianBlur stdDeviation="4"/></filter>
<filter id="d5" x="-1" y="-1" width="3" height="3" color-interpolation-filters="sRGB"><feGaussianBlur stdDeviation="5"/></filter>
<filter id="d6" x="-1" y="-1" width="3" height="3" color-interpolation-filters="sRGB"><feGaussianBlur stdDeviation="6"/></filter>
<filter id="d7" x="-1" y="-1" width="3" height="3" color-interpolation-filters="sRGB"><feGaussianBlur stdDeviation="7"/></filter>
<filter id="d8" x="-1" y="-1" width="3" height="3" color-interpolation-filters="sRGB"><feGaussianBlur stdDeviation="8"/></filter>
<filter id="d10" x="-1" y="-1" width="3" height="3" color-interpolation-filters="sRGB"><feGaussianBlur stdDeviation="10"/></filter>
<filter id="d12" x="-1" y="-1" width="3" height="3" color-interpolation-filters="sRGB"><feGaussianBlur stdDeviation="12"/></filter>
<filter id="d14" x="-1" y="-1" width="3" height="3" color-interpolation-filters="sRGB"><feGaussianBlur stdDeviation="14"/></filter>
<linearGradient id="gLeft" x1="160" y1="200" x2="240" y2="230" gradientUnits="userSpaceOnUse"><stop offset="0" stop-color="#3f8600"/><stop offset="0.12" stop-color="#4a7800"/><stop offset="0.45" stop-color="#5c5a00"/><stop offset="0.8" stop-color="#465e00"/><stop offset="1" stop-color="#3c5c00"/></linearGradient>
</defs>
<g clip-path="url(#clip3d)">
<g stroke="#000" stroke-width="1.3" fill="none" stroke-linecap="round">
<path d="M99.3 129.3 L354.7 86.8"/>
<path d="M354.7 86.8 L507 182.4 L480 344.7" stroke-width="1.1"/>
<path d="M99.3 129.3 L119.4 278.8 L190 420"/>
<path d="M119.4 278.8 L175 266.4"/>
<path d="M354.7 86.8 V94"/>
</g>
<polygon points="155.7,126.2 353.9,92.1 468.5,164.4 450.2,317.6 240.2,383 169,267.7" fill="#446800" stroke="#446800" stroke-width="0.6"/>
<g clip-path="url(#cLeft)">
<rect x="150" y="120" width="100" height="270" fill="#3f5a00"/>
<polygon points="176,150 200,180 232,366 198,316" fill="#5e5400" filter="url(#d8)"/>
<polygon points="150,118 160,130 172,274 160,262" fill="#378400" filter="url(#d2)"/>
<polygon points="150,118 172,144 178,190 158,190" fill="#3a6800" filter="url(#d5)"/>
<polygon points="224,336 245,332 245,390 228,376" fill="#788600" filter="url(#d6)"/>
<polygon points="214,198 236,222 238,290 220,262" fill="#354e00" filter="url(#d5)"/>
</g>
<g clip-path="url(#cTop)"><g filter="url(#cmTop)">
<rect x="140" y="80" width="340" height="150" fill="#8e8e8e"/>
<polygon points="176,146 212,140 290,200 248,214" fill="#6c6c6c" filter="url(#d6)"/>
<polygon points="230,150 300,138 330,170 300,200 262,205" fill="#808080" filter="url(#d8)"/>
<polygon points="325,150 350,146 372,186 345,192" fill="#808080" filter="url(#d6)"/>
<ellipse cx="209" cy="135.2" rx="40" ry="9" fill="#adadad" filter="url(#d4)" transform="rotate(-9.5 209 135.2)"/>
<ellipse cx="209" cy="135" rx="27" ry="4.6" fill="#e0e0e0" filter="url(#d2)" transform="rotate(-9.5 209 135)"/>
<ellipse cx="267" cy="148" rx="24" ry="8" fill="#5e5e5e" filter="url(#d4)" transform="rotate(-10 267 148)"/>
<ellipse cx="267.7" cy="147.3" rx="8" ry="2.4" fill="#333333" filter="url(#d2)" transform="rotate(-10 267.7 147.3)"/>
<ellipse cx="287" cy="156" rx="20" ry="4.5" fill="#adadad" filter="url(#d3)" transform="rotate(-12 287 156)"/>
<ellipse cx="239" cy="184.5" rx="31" ry="14" fill="#5c5c5c" filter="url(#d5)" transform="rotate(-5 239 184.5)"/>
<ellipse cx="238.5" cy="184.2" rx="19" ry="7.5" fill="#303030" filter="url(#d2)" transform="rotate(-5 238.5 184.2)"/>
<ellipse cx="333" cy="132" rx="40" ry="10" fill="#ababab" filter="url(#d5)" transform="rotate(28 333 132)"/>
<ellipse cx="350" cy="128" rx="38" ry="12" fill="#b2b2b2" filter="url(#d5)" transform="rotate(-8 350 128)"/>
<ellipse cx="347" cy="128" rx="24" ry="6" fill="#dedede" filter="url(#d3)" transform="rotate(-8 347 128)"/>
<ellipse cx="321" cy="103.2" rx="15" ry="4.5" fill="#616161" filter="url(#d3)" transform="rotate(-8 321 103.2)"/>
<ellipse cx="383" cy="133.4" rx="18" ry="5.5" fill="#5e5e5e" filter="url(#d3)" transform="rotate(-4 383 133.4)"/>
<ellipse cx="380" cy="158" rx="32" ry="10" fill="#575757" filter="url(#d4)" transform="rotate(-8 380 158)"/>
<ellipse cx="380.4" cy="158" rx="17" ry="4.2" fill="#050505" filter="url(#d2)" transform="rotate(-8 380.4 158)"/>
<ellipse cx="389" cy="175.5" rx="22" ry="5.5" fill="#c2c2c2" filter="url(#d3)" transform="rotate(-10 389 175.5)"/>
</g></g>
<g clip-path="url(#cFront)"><g filter="url(#cmFront)">
<rect x="225" y="160" width="250" height="230" fill="#8b8b8b"/>
<polygon points="454,160 475,160 470,300 449,320" fill="#757575" filter="url(#d4)"/>
<polygon points="228,300 300,330 330,365 235,395" fill="#737373" filter="url(#d10)"/>
<polygon points="228,212 330,190 334,212 232,240" fill="#7d7d7d" filter="url(#d6)"/>
<ellipse cx="265" cy="292" rx="42" ry="72" fill="#636363" filter="url(#d10)" transform="rotate(14 265 292)"/>
<ellipse cx="265" cy="290" rx="27" ry="52" fill="#575757" filter="url(#d7)" transform="rotate(14 265 290)"/>
<ellipse cx="261.5" cy="288" rx="8" ry="24" fill="#505050" filter="url(#d4)" transform="rotate(14 261.5 288)"/>
<ellipse cx="261" cy="288" rx="3.5" ry="13" fill="#4b4b4b" filter="url(#d2)" transform="rotate(14 261 288)"/>
<polygon points="316,390 325,320 336,272 352,233 372,207 400,194 426,200 445,223 453,256 454,288 451,335" fill="#b2b2b2" filter="url(#d8)"/>
<polygon points="344,385 352,313 362,272 378,240 400,222 420,226 435,249 442,281 445,335" fill="#dfdfdf" filter="url(#d7)"/>
<polygon points="364,380 370,325 377,300 391,284 411,282 427,295 434,317 436,340" fill="#ffffff" filter="url(#d6)"/>
</g></g>
<g fill="#000" opacity="0.62"><rect x="107.5" y="129.9" width="1.1" height="1.1"/><rect x="121.8" y="127.6" width="1.1" height="1.1"/><rect x="135.8" y="125.2" width="1.1" height="1.1"/><rect x="149.7" y="122.9" width="1.1" height="1.1"/><rect x="163.4" y="120.6" width="1.1" height="1.1"/><rect x="177.0" y="118.3" width="1.1" height="1.1"/><rect x="190.4" y="116.1" width="1.1" height="1.1"/><rect x="203.6" y="113.8" width="1.1" height="1.1"/><rect x="216.7" y="111.7" width="1.1" height="1.1"/><rect x="229.7" y="109.5" width="1.1" height="1.1"/><rect x="242.5" y="107.3" width="1.1" height="1.1"/><rect x="255.1" y="105.2" width="1.1" height="1.1"/><rect x="267.6" y="103.1" width="1.1" height="1.1"/><rect x="280.0" y="101.1" width="1.1" height="1.1"/><rect x="292.2" y="99.0" width="1.1" height="1.1"/><rect x="304.3" y="97.0" width="1.1" height="1.1"/><rect x="316.3" y="95.0" width="1.1" height="1.1"/><rect x="328.1" y="93.0" width="1.1" height="1.1"/><rect x="339.8" y="91.0" width="1.1" height="1.1"/><rect x="351.4" y="89.1" width="1.1" height="1.1"/><rect x="110.8" y="134.7" width="1.1" height="1.1"/><rect x="125.2" y="132.2" width="1.1" height="1.1"/><rect x="139.4" y="129.8" width="1.1" height="1.1"/><rect x="153.5" y="127.4" width="1.1" height="1.1"/><rect x="167.4" y="125.1" width="1.1" height="1.1"/><rect x="181.1" y="122.8" width="1.1" height="1.1"/><rect x="194.6" y="120.5" width="1.1" height="1.1"/><rect x="208.0" y="118.2" width="1.1" height="1.1"/><rect x="221.3" y="115.9" width="1.1" height="1.1"/><rect x="234.3" y="113.7" width="1.1" height="1.1"/><rect x="247.3" y="111.5" width="1.1" height="1.1"/><rect x="260.1" y="109.4" width="1.1" height="1.1"/><rect x="272.7" y="107.2" width="1.1" height="1.1"/><rect x="285.2" y="105.1" width="1.1" height="1.1"/><rect x="297.5" y="103.0" width="1.1" height="1.1"/><rect x="309.8" y="100.9" width="1.1" height="1.1"/><rect x="321.8" y="98.9" width="1.1" height="1.1"/><rect x="333.8" y="96.8" width="1.1" height="1.1"/><rect x="345.6" y="94.8" width="1.1" height="1.1"/><rect x="357.3" y="92.8" width="1.1" height="1.1"/><rect x="114.2" y="139.6" width="1.1" height="1.1"/><rect x="128.8" y="137.1" width="1.1" height="1.1"/><rect x="143.1" y="134.6" width="1.1" height="1.1"/><rect x="157.4" y="132.1" width="1.1" height="1.1"/><rect x="171.4" y="129.7" width="1.1" height="1.1"/><rect x="185.3" y="127.3" width="1.1" height="1.1"/><rect x="199.0" y="125.0" width="1.1" height="1.1"/><rect x="212.5" y="122.6" width="1.1" height="1.1"/><rect x="225.9" y="120.3" width="1.1" height="1.1"/><rect x="239.1" y="118.1" width="1.1" height="1.1"/><rect x="252.2" y="115.8" width="1.1" height="1.1"/><rect x="265.1" y="113.6" width="1.1" height="1.1"/><rect x="277.9" y="111.4" width="1.1" height="1.1"/><rect x="290.5" y="109.2" width="1.1" height="1.1"/><rect x="303.0" y="107.1" width="1.1" height="1.1"/><rect x="315.3" y="105.0" width="1.1" height="1.1"/><rect x="327.5" y="102.9" width="1.1" height="1.1"/><rect x="339.6" y="100.8" width="1.1" height="1.1"/><rect x="351.5" y="98.7" width="1.1" height="1.1"/><rect x="363.3" y="96.7" width="1.1" height="1.1"/><rect x="117.7" y="144.6" width="1.1" height="1.1"/><rect x="132.4" y="142.0" width="1.1" height="1.1"/><rect x="147.0" y="139.5" width="1.1" height="1.1"/><rect x="161.4" y="136.9" width="1.1" height="1.1"/><rect x="175.6" y="134.5" width="1.1" height="1.1"/><rect x="189.6" y="132.0" width="1.1" height="1.1"/><rect x="203.5" y="129.6" width="1.1" height="1.1"/><rect x="217.2" y="127.2" width="1.1" height="1.1"/><rect x="230.7" y="124.9" width="1.1" height="1.1"/><rect x="244.1" y="122.5" width="1.1" height="1.1"/><rect x="257.3" y="120.2" width="1.1" height="1.1"/><rect x="270.3" y="117.9" width="1.1" height="1.1"/><rect x="283.2" y="115.7" width="1.1" height="1.1"/><rect x="296.0" y="113.5" width="1.1" height="1.1"/><rect x="308.6" y="111.3" width="1.1" height="1.1"/><rect x="321.1" y="109.1" width="1.1" height="1.1"/><rect x="333.4" y="106.9" width="1.1" height="1.1"/><rect x="345.6" y="104.8" width="1.1" height="1.1"/><rect x="357.6" y="102.7" width="1.1" height="1.1"/><rect x="369.5" y="100.6" width="1.1" height="1.1"/><rect x="121.2" y="149.7" width="1.1" height="1.1"/><rect x="136.1" y="147.1" width="1.1" height="1.1"/><rect x="150.9" y="144.5" width="1.1" height="1.1"/><rect x="165.5" y="141.9" width="1.1" height="1.1"/><rect x="179.8" y="139.4" width="1.1" height="1.1"/><rect x="194.0" y="136.8" width="1.1" height="1.1"/><rect x="208.1" y="134.4" width="1.1" height="1.1"/><rect x="221.9" y="131.9" width="1.1" height="1.1"/><rect x="235.6" y="129.5" width="1.1" height="1.1"/><rect x="249.1" y="127.1" width="1.1" height="1.1"/><rect x="262.5" y="124.7" width="1.1" height="1.1"/><rect x="275.7" y="122.4" width="1.1" height="1.1"/><rect x="288.7" y="120.1" width="1.1" height="1.1"/><rect x="301.6" y="117.8" width="1.1" height="1.1"/><rect x="314.3" y="115.6" width="1.1" height="1.1"/><rect x="326.9" y="113.3" width="1.1" height="1.1"/><rect x="339.4" y="111.1" width="1.1" height="1.1"/><rect x="351.7" y="109.0" width="1.1" height="1.1"/><rect x="363.8" y="106.8" width="1.1" height="1.1"/><rect x="375.8" y="104.7" width="1.1" height="1.1"/><rect x="124.9" y="155.0" width="1.1" height="1.1"/><rect x="140.0" y="152.3" width="1.1" height="1.1"/><rect x="154.9" y="149.6" width="1.1" height="1.1"/><rect x="169.7" y="147.0" width="1.1" height="1.1"/><rect x="184.2" y="144.4" width="1.1" height="1.1"/><rect x="198.6" y="141.8" width="1.1" height="1.1"/><rect x="212.8" y="139.3" width="1.1" height="1.1"/><rect x="226.8" y="136.7" width="1.1" height="1.1"/><rect x="240.6" y="134.3" width="1.1" height="1.1"/><rect x="254.3" y="131.8" width="1.1" height="1.1"/><rect x="267.8" y="129.4" width="1.1" height="1.1"/><rect x="281.2" y="127.0" width="1.1" height="1.1"/><rect x="294.3" y="124.6" width="1.1" height="1.1"/><rect x="307.4" y="122.3" width="1.1" height="1.1"/><rect x="320.2" y="120.0" width="1.1" height="1.1"/><rect x="332.9" y="117.7" width="1.1" height="1.1"/><rect x="345.5" y="115.4" width="1.1" height="1.1"/><rect x="357.9" y="113.2" width="1.1" height="1.1"/><rect x="370.2" y="111.0" width="1.1" height="1.1"/><rect x="382.4" y="108.8" width="1.1" height="1.1"/><rect x="128.6" y="160.5" width="1.1" height="1.1"/><rect x="144.0" y="157.7" width="1.1" height="1.1"/><rect x="159.1" y="154.9" width="1.1" height="1.1"/><rect x="174.0" y="152.2" width="1.1" height="1.1"/><rect x="188.7" y="149.5" width="1.1" height="1.1"/><rect x="203.3" y="146.9" width="1.1" height="1.1"/><rect x="217.6" y="144.3" width="1.1" height="1.1"/><rect x="231.8" y="141.7" width="1.1" height="1.1"/><rect x="245.8" y="139.1" width="1.1" height="1.1"/><rect x="259.6" y="136.6" width="1.1" height="1.1"/><rect x="273.3" y="134.1" width="1.1" height="1.1"/><rect x="286.8" y="131.7" width="1.1" height="1.1"/><rect x="300.1" y="129.3" width="1.1" height="1.1"/><rect x="313.3" y="126.9" width="1.1" height="1.1"/><rect x="326.3" y="124.5" width="1.1" height="1.1"/><rect x="339.1" y="122.2" width="1.1" height="1.1"/><rect x="351.8" y="119.9" width="1.1" height="1.1"/><rect x="364.4" y="117.6" width="1.1" height="1.1"/><rect x="376.8" y="115.3" width="1.1" height="1.1"/><rect x="389.0" y="113.1" width="1.1" height="1.1"/><rect x="132.5" y="166.1" width="1.1" height="1.1"/><rect x="148.0" y="163.2" width="1.1" height="1.1"/><rect x="163.4" y="160.4" width="1.1" height="1.1"/><rect x="178.5" y="157.6" width="1.1" height="1.1"/><rect x="193.4" y="154.8" width="1.1" height="1.1"/><rect x="208.1" y="152.1" width="1.1" height="1.1"/><rect x="222.6" y="149.4" width="1.1" height="1.1"/><rect x="237.0" y="146.8" width="1.1" height="1.1"/><rect x="251.1" y="144.2" width="1.1" height="1.1"/><rect x="265.1" y="141.6" width="1.1" height="1.1"/><rect x="278.9" y="139.0" width="1.1" height="1.1"/><rect x="292.6" y="136.5" width="1.1" height="1.1"/><rect x="306.0" y="134.0" width="1.1" height="1.1"/><rect x="319.3" y="131.6" width="1.1" height="1.1"/><rect x="332.5" y="129.2" width="1.1" height="1.1"/><rect x="345.5" y="126.8" width="1.1" height="1.1"/><rect x="358.3" y="124.4" width="1.1" height="1.1"/><rect x="371.0" y="122.0" width="1.1" height="1.1"/><rect x="383.5" y="119.7" width="1.1" height="1.1"/><rect x="395.9" y="117.4" width="1.1" height="1.1"/><rect x="136.5" y="171.9" width="1.1" height="1.1"/><rect x="152.2" y="168.9" width="1.1" height="1.1"/><rect x="167.7" y="166.0" width="1.1" height="1.1"/><rect x="183.0" y="163.1" width="1.1" height="1.1"/><rect x="198.1" y="160.3" width="1.1" height="1.1"/><rect x="213.1" y="157.5" width="1.1" height="1.1"/><rect x="227.8" y="154.8" width="1.1" height="1.1"/><rect x="242.3" y="152.0" width="1.1" height="1.1"/><rect x="256.6" y="149.4" width="1.1" height="1.1"/><rect x="270.8" y="146.7" width="1.1" height="1.1"/><rect x="284.7" y="144.1" width="1.1" height="1.1"/><rect x="298.5" y="141.5" width="1.1" height="1.1"/><rect x="312.1" y="138.9" width="1.1" height="1.1"/><rect x="325.6" y="136.4" width="1.1" height="1.1"/><rect x="338.9" y="133.9" width="1.1" height="1.1"/><rect x="352.0" y="131.5" width="1.1" height="1.1"/><rect x="365.0" y="129.0" width="1.1" height="1.1"/><rect x="377.8" y="126.6" width="1.1" height="1.1"/><rect x="390.4" y="124.3" width="1.1" height="1.1"/><rect x="402.9" y="121.9" width="1.1" height="1.1"/><rect x="140.6" y="177.8" width="1.1" height="1.1"/><rect x="156.6" y="174.8" width="1.1" height="1.1"/><rect x="172.3" y="171.8" width="1.1" height="1.1"/><rect x="187.8" y="168.9" width="1.1" height="1.1"/><rect x="203.1" y="165.9" width="1.1" height="1.1"/><rect x="218.2" y="163.1" width="1.1" height="1.1"/><rect x="233.0" y="160.2" width="1.1" height="1.1"/><rect x="247.7" y="157.4" width="1.1" height="1.1"/><rect x="262.2" y="154.7" width="1.1" height="1.1"/><rect x="276.6" y="152.0" width="1.1" height="1.1"/><rect x="290.7" y="149.3" width="1.1" height="1.1"/><rect x="304.6" y="146.6" width="1.1" height="1.1"/><rect x="318.4" y="144.0" width="1.1" height="1.1"/><rect x="332.0" y="141.4" width="1.1" height="1.1"/><rect x="345.4" y="138.8" width="1.1" height="1.1"/><rect x="358.7" y="136.3" width="1.1" height="1.1"/><rect x="371.8" y="133.8" width="1.1" height="1.1"/><rect x="384.7" y="131.4" width="1.1" height="1.1"/><rect x="397.5" y="128.9" width="1.1" height="1.1"/><rect x="410.1" y="126.5" width="1.1" height="1.1"/><rect x="144.9" y="184.0" width="1.1" height="1.1"/><rect x="161.0" y="180.8" width="1.1" height="1.1"/><rect x="176.9" y="177.8" width="1.1" height="1.1"/><rect x="192.6" y="174.7" width="1.1" height="1.1"/><rect x="208.1" y="171.7" width="1.1" height="1.1"/><rect x="223.4" y="168.8" width="1.1" height="1.1"/><rect x="238.5" y="165.9" width="1.1" height="1.1"/><rect x="253.4" y="163.0" width="1.1" height="1.1"/><rect x="268.0" y="160.2" width="1.1" height="1.1"/><rect x="282.5" y="157.4" width="1.1" height="1.1"/><rect x="296.8" y="154.6" width="1.1" height="1.1"/><rect x="310.9" y="151.9" width="1.1" height="1.1"/><rect x="324.8" y="149.2" width="1.1" height="1.1"/><rect x="338.6" y="146.5" width="1.1" height="1.1"/><rect x="352.2" y="143.9" width="1.1" height="1.1"/><rect x="365.6" y="141.3" width="1.1" height="1.1"/><rect x="378.8" y="138.7" width="1.1" height="1.1"/><rect x="391.9" y="136.2" width="1.1" height="1.1"/><rect x="404.8" y="133.7" width="1.1" height="1.1"/><rect x="417.5" y="131.2" width="1.1" height="1.1"/><rect x="149.3" y="190.3" width="1.1" height="1.1"/><rect x="165.6" y="187.1" width="1.1" height="1.1"/><rect x="181.8" y="183.9" width="1.1" height="1.1"/><rect x="197.7" y="180.8" width="1.1" height="1.1"/><rect x="213.4" y="177.7" width="1.1" height="1.1"/><rect x="228.8" y="174.7" width="1.1" height="1.1"/><rect x="244.1" y="171.7" width="1.1" height="1.1"/><rect x="259.1" y="168.7" width="1.1" height="1.1"/><rect x="274.0" y="165.8" width="1.1" height="1.1"/><rect x="288.7" y="162.9" width="1.1" height="1.1"/><rect x="303.1" y="160.1" width="1.1" height="1.1"/><rect x="317.4" y="157.3" width="1.1" height="1.1"/><rect x="331.5" y="154.5" width="1.1" height="1.1"/><rect x="345.4" y="151.8" width="1.1" height="1.1"/><rect x="359.1" y="149.1" width="1.1" height="1.1"/><rect x="372.7" y="146.4" width="1.1" height="1.1"/><rect x="386.0" y="143.8" width="1.1" height="1.1"/><rect x="399.2" y="141.2" width="1.1" height="1.1"/><rect x="412.3" y="138.6" width="1.1" height="1.1"/><rect x="425.2" y="136.1" width="1.1" height="1.1"/><rect x="153.8" y="196.8" width="1.1" height="1.1"/><rect x="170.4" y="193.5" width="1.1" height="1.1"/><rect x="186.7" y="190.3" width="1.1" height="1.1"/><rect x="202.8" y="187.0" width="1.1" height="1.1"/><rect x="218.7" y="183.9" width="1.1" height="1.1"/><rect x="234.4" y="180.7" width="1.1" height="1.1"/><rect x="249.9" y="177.7" width="1.1" height="1.1"/><rect x="265.1" y="174.6" width="1.1" height="1.1"/><rect x="280.1" y="171.6" width="1.1" height="1.1"/><rect x="295.0" y="168.6" width="1.1" height="1.1"/><rect x="309.6" y="165.7" width="1.1" height="1.1"/><rect x="324.1" y="162.8" width="1.1" height="1.1"/><rect x="338.3" y="160.0" width="1.1" height="1.1"/><rect x="352.4" y="157.2" width="1.1" height="1.1"/><rect x="366.2" y="154.4" width="1.1" height="1.1"/><rect x="379.9" y="151.7" width="1.1" height="1.1"/><rect x="393.5" y="149.0" width="1.1" height="1.1"/><rect x="406.8" y="146.3" width="1.1" height="1.1"/><rect x="420.0" y="143.7" width="1.1" height="1.1"/><rect x="433.0" y="141.1" width="1.1" height="1.1"/><rect x="158.4" y="203.6" width="1.1" height="1.1"/><rect x="175.3" y="200.2" width="1.1" height="1.1"/><rect x="191.8" y="196.8" width="1.1" height="1.1"/><rect x="208.2" y="193.5" width="1.1" height="1.1"/><rect x="224.3" y="190.2" width="1.1" height="1.1"/><rect x="240.2" y="187.0" width="1.1" height="1.1"/><rect x="255.8" y="183.8" width="1.1" height="1.1"/><rect x="271.3" y="180.7" width="1.1" height="1.1"/><rect x="286.5" y="177.6" width="1.1" height="1.1"/><rect x="301.5" y="174.5" width="1.1" height="1.1"/><rect x="316.3" y="171.5" width="1.1" height="1.1"/><rect x="330.9" y="168.6" width="1.1" height="1.1"/><rect x="345.3" y="165.6" width="1.1" height="1.1"/><rect x="359.6" y="162.8" width="1.1" height="1.1"/><rect x="373.6" y="159.9" width="1.1" height="1.1"/><rect x="387.4" y="157.1" width="1.1" height="1.1"/><rect x="401.1" y="154.3" width="1.1" height="1.1"/><rect x="414.6" y="151.6" width="1.1" height="1.1"/><rect x="427.9" y="148.9" width="1.1" height="1.1"/><rect x="441.0" y="146.2" width="1.1" height="1.1"/><rect x="163.3" y="210.5" width="1.1" height="1.1"/><rect x="180.3" y="207.0" width="1.1" height="1.1"/><rect x="197.1" y="203.6" width="1.1" height="1.1"/><rect x="213.7" y="200.1" width="1.1" height="1.1"/><rect x="230.0" y="196.8" width="1.1" height="1.1"/><rect x="246.1" y="193.5" width="1.1" height="1.1"/><rect x="262.0" y="190.2" width="1.1" height="1.1"/><rect x="277.6" y="186.9" width="1.1" height="1.1"/><rect x="293.0" y="183.8" width="1.1" height="1.1"/><rect x="308.2" y="180.6" width="1.1" height="1.1"/><rect x="323.2" y="177.5" width="1.1" height="1.1"/><rect x="338.0" y="174.5" width="1.1" height="1.1"/><rect x="352.6" y="171.5" width="1.1" height="1.1"/><rect x="367.0" y="168.5" width="1.1" height="1.1"/><rect x="381.1" y="165.6" width="1.1" height="1.1"/><rect x="395.1" y="162.7" width="1.1" height="1.1"/><rect x="409.0" y="159.8" width="1.1" height="1.1"/><rect x="422.6" y="157.0" width="1.1" height="1.1"/><rect x="436.1" y="154.2" width="1.1" height="1.1"/><rect x="449.3" y="151.5" width="1.1" height="1.1"/><rect x="168.2" y="217.7" width="1.1" height="1.1"/><rect x="185.5" y="214.1" width="1.1" height="1.1"/><rect x="202.6" y="210.5" width="1.1" height="1.1"/><rect x="219.4" y="207.0" width="1.1" height="1.1"/><rect x="235.9" y="203.5" width="1.1" height="1.1"/><rect x="252.2" y="200.1" width="1.1" height="1.1"/><rect x="268.3" y="196.7" width="1.1" height="1.1"/><rect x="284.1" y="193.4" width="1.1" height="1.1"/><rect x="299.7" y="190.1" width="1.1" height="1.1"/><rect x="315.1" y="186.9" width="1.1" height="1.1"/><rect x="330.3" y="183.7" width="1.1" height="1.1"/><rect x="345.3" y="180.6" width="1.1" height="1.1"/><rect x="360.0" y="177.5" width="1.1" height="1.1"/><rect x="374.6" y="174.4" width="1.1" height="1.1"/><rect x="388.9" y="171.4" width="1.1" height="1.1"/><rect x="403.1" y="168.4" width="1.1" height="1.1"/><rect x="417.1" y="165.5" width="1.1" height="1.1"/><rect x="430.8" y="162.6" width="1.1" height="1.1"/><rect x="444.4" y="159.8" width="1.1" height="1.1"/><rect x="457.9" y="156.9" width="1.1" height="1.1"/></g>
<g fill="#000" opacity="0.6"><rect x="239.6" y="220.8" width="1" height="1"/><rect x="254.2" y="217.6" width="1" height="1"/><rect x="268.9" y="214.3" width="1" height="1"/><rect x="283.6" y="211.0" width="1" height="1"/><rect x="298.3" y="207.7" width="1" height="1"/><rect x="313.0" y="204.4" width="1" height="1"/><rect x="327.7" y="201.2" width="1" height="1"/><rect x="342.4" y="197.9" width="1" height="1"/><rect x="357.1" y="194.6" width="1" height="1"/><rect x="371.8" y="191.3" width="1" height="1"/><rect x="386.5" y="188.1" width="1" height="1"/><rect x="401.2" y="184.8" width="1" height="1"/><rect x="415.8" y="181.5" width="1" height="1"/><rect x="430.5" y="178.2" width="1" height="1"/><rect x="445.2" y="174.9" width="1" height="1"/><rect x="459.9" y="171.7" width="1" height="1"/><rect x="239.9" y="228.3" width="1" height="1"/><rect x="254.5" y="225.0" width="1" height="1"/><rect x="269.1" y="221.7" width="1" height="1"/><rect x="283.7" y="218.4" width="1" height="1"/><rect x="298.3" y="215.0" width="1" height="1"/><rect x="313.0" y="211.7" width="1" height="1"/><rect x="327.6" y="208.4" width="1" height="1"/><rect x="342.2" y="205.1" width="1" height="1"/><rect x="356.8" y="201.8" width="1" height="1"/><rect x="371.4" y="198.5" width="1" height="1"/><rect x="386.0" y="195.2" width="1" height="1"/><rect x="400.7" y="191.8" width="1" height="1"/><rect x="415.3" y="188.5" width="1" height="1"/><rect x="429.9" y="185.2" width="1" height="1"/><rect x="444.5" y="181.9" width="1" height="1"/><rect x="459.1" y="178.6" width="1" height="1"/><rect x="240.2" y="236.6" width="1" height="1"/><rect x="254.8" y="233.3" width="1" height="1"/><rect x="269.3" y="229.9" width="1" height="1"/><rect x="283.8" y="226.6" width="1" height="1"/><rect x="298.4" y="223.2" width="1" height="1"/><rect x="312.9" y="219.8" width="1" height="1"/><rect x="327.4" y="216.5" width="1" height="1"/><rect x="342.0" y="213.1" width="1" height="1"/><rect x="356.5" y="209.8" width="1" height="1"/><rect x="371.0" y="206.4" width="1" height="1"/><rect x="385.6" y="203.0" width="1" height="1"/><rect x="400.1" y="199.7" width="1" height="1"/><rect x="414.7" y="196.3" width="1" height="1"/><rect x="429.2" y="193.0" width="1" height="1"/><rect x="443.7" y="189.6" width="1" height="1"/><rect x="458.3" y="186.3" width="1" height="1"/><rect x="240.6" y="245.8" width="1" height="1"/><rect x="255.1" y="242.4" width="1" height="1"/><rect x="269.5" y="239.0" width="1" height="1"/><rect x="283.9" y="235.6" width="1" height="1"/><rect x="298.4" y="232.2" width="1" height="1"/><rect x="312.8" y="228.8" width="1" height="1"/><rect x="327.3" y="225.3" width="1" height="1"/><rect x="341.7" y="221.9" width="1" height="1"/><rect x="356.2" y="218.5" width="1" height="1"/><rect x="370.6" y="215.1" width="1" height="1"/><rect x="385.1" y="211.7" width="1" height="1"/><rect x="399.5" y="208.3" width="1" height="1"/><rect x="414.0" y="204.9" width="1" height="1"/><rect x="428.4" y="201.5" width="1" height="1"/><rect x="442.9" y="198.1" width="1" height="1"/><rect x="457.3" y="194.7" width="1" height="1"/><rect x="241.0" y="255.7" width="1" height="1"/><rect x="255.4" y="252.3" width="1" height="1"/><rect x="269.7" y="248.8" width="1" height="1"/><rect x="284.1" y="245.4" width="1" height="1"/><rect x="298.4" y="241.9" width="1" height="1"/><rect x="312.8" y="238.5" width="1" height="1"/><rect x="327.1" y="235.0" width="1" height="1"/><rect x="341.5" y="231.6" width="1" height="1"/><rect x="355.8" y="228.1" width="1" height="1"/><rect x="370.2" y="224.7" width="1" height="1"/><rect x="384.5" y="221.2" width="1" height="1"/><rect x="398.9" y="217.7" width="1" height="1"/><rect x="413.2" y="214.3" width="1" height="1"/><rect x="427.6" y="210.8" width="1" height="1"/><rect x="441.9" y="207.4" width="1" height="1"/><rect x="456.3" y="203.9" width="1" height="1"/><rect x="162.4" y="141.6" width="1" height="1"/><rect x="175.1" y="156.3" width="1" height="1"/><rect x="187.8" y="171.1" width="1" height="1"/><rect x="200.5" y="185.9" width="1" height="1"/><rect x="213.2" y="200.6" width="1" height="1"/><rect x="225.9" y="215.4" width="1" height="1"/><rect x="163.4" y="152.7" width="1" height="1"/><rect x="176.0" y="167.2" width="1" height="1"/><rect x="188.6" y="181.6" width="1" height="1"/><rect x="201.2" y="196.0" width="1" height="1"/><rect x="213.8" y="210.5" width="1" height="1"/><rect x="226.4" y="224.9" width="1" height="1"/><rect x="164.5" y="165.3" width="1" height="1"/><rect x="177.0" y="179.3" width="1" height="1"/><rect x="189.5" y="193.4" width="1" height="1"/><rect x="201.9" y="207.5" width="1" height="1"/><rect x="214.4" y="221.5" width="1" height="1"/><rect x="226.9" y="235.6" width="1" height="1"/><rect x="165.8" y="179.2" width="1" height="1"/><rect x="178.1" y="192.9" width="1" height="1"/><rect x="190.5" y="206.5" width="1" height="1"/><rect x="202.8" y="220.2" width="1" height="1"/><rect x="215.2" y="233.8" width="1" height="1"/><rect x="227.5" y="247.5" width="1" height="1"/><rect x="167.3" y="196.0" width="1" height="1"/><rect x="179.5" y="209.1" width="1" height="1"/><rect x="191.7" y="222.3" width="1" height="1"/><rect x="203.9" y="235.4" width="1" height="1"/><rect x="216.1" y="248.6" width="1" height="1"/><rect x="228.3" y="261.7" width="1" height="1"/></g>
<g stroke="#000" stroke-width="1.3" fill="none" stroke-linecap="round">
<path d="M99.3 129.3 L184 256"/>
<path d="M184 256 L199 415" stroke-width="1.8"/>
<path d="M169.5 231 L469.3 163.6" stroke-width="1.5"/>
<path d="M480 344.7 L290 410" stroke-width="1.1"/>
<path d="M450.2 317.6 L480 344.7" stroke-width="1.6"/>
</g>
<text x="183.0" y="266.3" font-size="8.4" text-anchor="end" transform="rotate(-6 183.0 263.3)">0</text>
<path d="M183.6 261.7 l2.2 -0.4" stroke="#000" stroke-width="0.8"/>
<text x="184.3" y="284.5" font-size="8.4" text-anchor="end" transform="rotate(-6 184.3 281.5)">10</text>
<path d="M184.9 279.9 l2.2 -0.4" stroke="#000" stroke-width="0.8"/>
<text x="185.6" y="302.6" font-size="8.4" text-anchor="end" transform="rotate(-6 185.6 299.6)">20</text>
<path d="M186.2 298.0 l2.2 -0.4" stroke="#000" stroke-width="0.8"/>
<text x="186.9" y="321.0" font-size="8.4" text-anchor="end" transform="rotate(-6 186.9 318.0)">30</text>
<path d="M187.5 316.4 l2.2 -0.4" stroke="#000" stroke-width="0.8"/>
<text x="188.2" y="338.4" font-size="8.4" text-anchor="end" transform="rotate(-6 188.2 335.4)">40</text>
<path d="M188.8 333.8 l2.2 -0.4" stroke="#000" stroke-width="0.8"/>
<text x="189.5" y="354.5" font-size="8.4" text-anchor="end" transform="rotate(-6 189.5 351.5)">50</text>
<path d="M190.1 349.9 l2.2 -0.4" stroke="#000" stroke-width="0.8"/>
<text x="190.8" y="370.4" font-size="8.4" text-anchor="end" transform="rotate(-6 190.8 367.4)">60</text>
<path d="M191.4 365.8 l2.2 -0.4" stroke="#000" stroke-width="0.8"/>
<text x="192.1" y="387.0" font-size="8.4" text-anchor="end" transform="rotate(-6 192.1 384.0)">70</text>
<path d="M192.7 382.4 l2.2 -0.4" stroke="#000" stroke-width="0.8"/>
<text x="193.4" y="403.2" font-size="8.4" text-anchor="end" transform="rotate(-6 193.4 400.2)">80</text>
<path d="M194.0 398.6 l2.2 -0.4" stroke="#000" stroke-width="0.8"/>
<text x="173" y="366" font-size="7" transform="rotate(-80 173 366)">z</text>
<text x="324.5" y="406.7" font-size="6.2" text-anchor="middle" transform="rotate(-19 324.5 405.5)">40</text>
<path d="M322.5 400.8 l0.5 1.6" stroke="#000" stroke-width="0.6"/>
<text x="337.5" y="402.2" font-size="6.2" text-anchor="middle" transform="rotate(-19 337.5 401.0)">45</text>
<path d="M335.5 396.3 l0.5 1.6" stroke="#000" stroke-width="0.6"/>
<text x="350.6" y="397.6" font-size="6.2" text-anchor="middle" transform="rotate(-19 350.6 396.4)">50</text>
<path d="M348.6 391.7 l0.5 1.6" stroke="#000" stroke-width="0.6"/>
<text x="363.6" y="393.1" font-size="6.2" text-anchor="middle" transform="rotate(-19 363.6 391.9)">55</text>
<path d="M361.6 387.2 l0.5 1.6" stroke="#000" stroke-width="0.6"/>
<text x="376.7" y="388.5" font-size="6.2" text-anchor="middle" transform="rotate(-19 376.7 387.3)">60</text>
<path d="M374.7 382.6 l0.5 1.6" stroke="#000" stroke-width="0.6"/>
<text x="389.7" y="384.0" font-size="6.2" text-anchor="middle" transform="rotate(-19 389.7 382.8)">65</text>
<path d="M387.7 378.1 l0.5 1.6" stroke="#000" stroke-width="0.6"/>
<text x="402.8" y="379.4" font-size="6.2" text-anchor="middle" transform="rotate(-19 402.8 378.2)">70</text>
<path d="M400.8 373.6 l0.5 1.6" stroke="#000" stroke-width="0.6"/>
<text x="415.8" y="374.9" font-size="6.2" text-anchor="middle" transform="rotate(-19 415.8 373.7)">75</text>
<path d="M413.8 369.0 l0.5 1.6" stroke="#000" stroke-width="0.6"/>
<text x="428.8" y="370.4" font-size="6.2" text-anchor="middle" transform="rotate(-19 428.8 369.2)">80</text>
<path d="M426.8 364.5 l0.5 1.6" stroke="#000" stroke-width="0.6"/>
<text x="441.9" y="365.8" font-size="6.2" text-anchor="middle" transform="rotate(-19 441.9 364.6)">85</text>
<path d="M439.9 359.9 l0.5 1.6" stroke="#000" stroke-width="0.6"/>
<text x="454.9" y="361.3" font-size="6.2" text-anchor="middle" transform="rotate(-19 454.9 360.1)">90</text>
<path d="M452.9 355.4 l0.5 1.6" stroke="#000" stroke-width="0.6"/>
<text x="468.0" y="356.7" font-size="6.2" text-anchor="middle" transform="rotate(-19 468.0 355.5)">95</text>
<path d="M466.0 350.8 l0.5 1.6" stroke="#000" stroke-width="0.6"/>
<text x="481.0" y="352.2" font-size="6.2" text-anchor="middle" transform="rotate(-19 481.0 351.0)">100</text>
<path d="M479.0 346.3 l0.5 1.6" stroke="#000" stroke-width="0.6"/>
<text x="458.0" y="318.4" font-size="4.6" transform="rotate(-30 455.5 317.4)">85</text>
<text x="465.3" y="325.2" font-size="4.6" transform="rotate(-30 462.8 324.2)">90</text>
<text x="472.6" y="332.0" font-size="4.6" transform="rotate(-30 470.1 331.0)">95</text>
</g></svg>
</body>
</html>
